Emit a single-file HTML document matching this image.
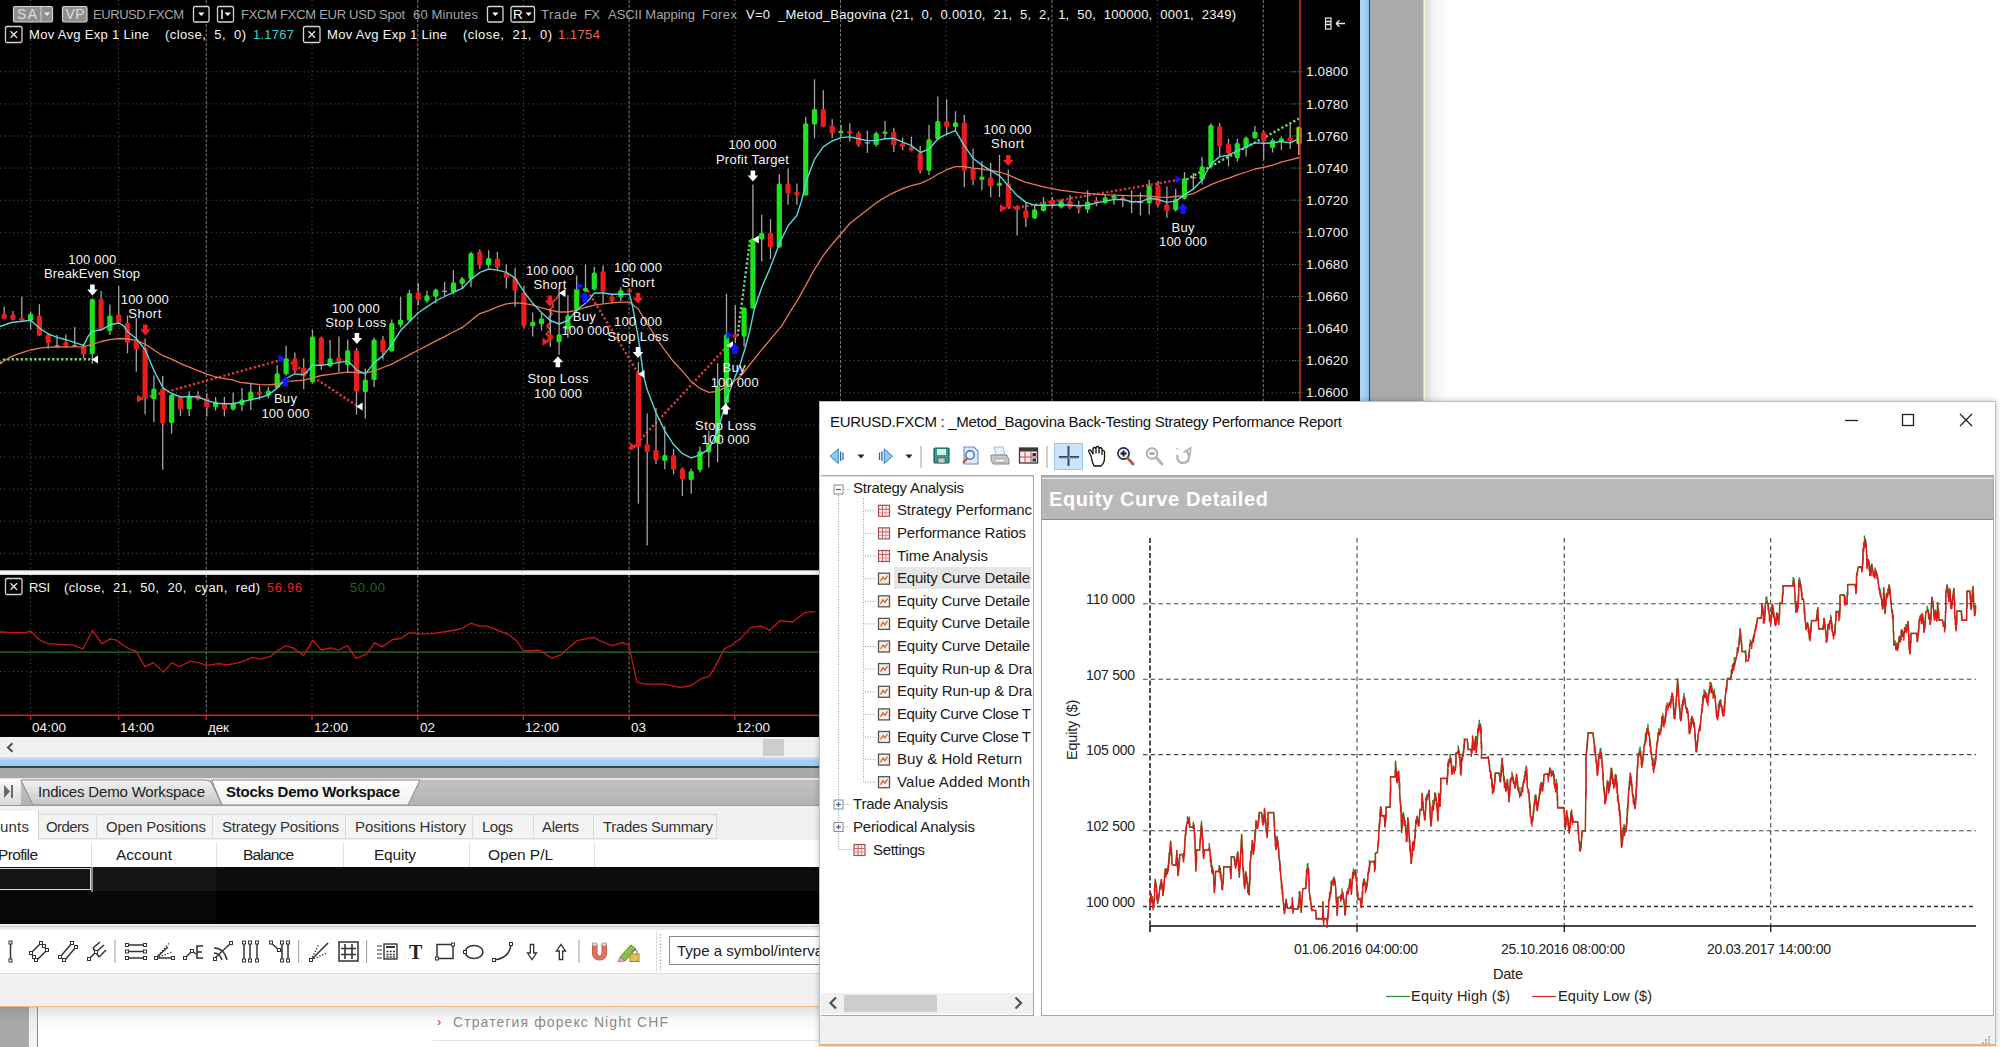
<!DOCTYPE html>
<html><head><meta charset="utf-8"><title>MultiCharts</title>
<style>
html,body{margin:0;padding:0;}
body{width:2000px;height:1047px;position:relative;overflow:hidden;background:#fff;font-family:"Liberation Sans",sans-serif;}
svg{position:absolute;left:0;top:0;overflow:visible;}
</style></head><body>
<div style="position:absolute;left:0px;top:0px;width:2000px;height:1047px;background:#ffffff;"></div>
<div style="position:absolute;left:1425px;top:0px;width:30px;height:401px;background:linear-gradient(90deg,#dcdcdc 0,#f2f2f2 8px,#ffffff 24px);"></div>
<div style="position:absolute;left:0px;top:1007px;width:820px;height:40px;background:#ffffff;"></div>
<div style="position:absolute;left:0px;top:1007px;width:28.5px;height:40px;background:#a9a9a9;"></div>
<div style="position:absolute;left:28.5px;top:1007px;width:8px;height:40px;background:#f3f3f3;"></div>
<div style="position:absolute;left:36.5px;top:1007px;width:1.2px;height:40px;background:#8c8c8c;"></div>
<div style="position:absolute;left:0px;top:1007px;width:820px;height:24px;background:linear-gradient(180deg,rgba(60,60,60,.16),rgba(120,120,120,.05) 50%,rgba(255,255,255,0));"></div>
<span style="position:absolute;left:437.0px;top:1012.5px;font-size:13px;line-height:17px;color:#d04020;white-space:pre;">›</span>
<span style="position:absolute;left:453.0px;top:1013.0px;font-size:14px;line-height:18px;color:#8a8a8a;white-space:pre;letter-spacing:1.095px;">Стратегия форекс Night CHF</span>
<div style="position:absolute;left:433px;top:1040px;width:390px;height:1px;background:#e4e4e4;"></div>
<div style="position:absolute;left:0px;top:0px;width:1360px;height:737px;background:#000000;"></div>
<svg width="1360" height="737" fill="none"><path d="M0 71.8 H1299" stroke="#606060" stroke-width="1" stroke-dasharray="1 3.4"/><path d="M1292 71.8 H1305" stroke="#8a8a8a" stroke-width="1" stroke-dasharray="1 2.2"/><path d="M0 103.9 H1299" stroke="#606060" stroke-width="1" stroke-dasharray="1 3.4"/><path d="M1292 103.9 H1305" stroke="#8a8a8a" stroke-width="1" stroke-dasharray="1 2.2"/><path d="M0 136.0 H1299" stroke="#606060" stroke-width="1" stroke-dasharray="1 3.4"/><path d="M1292 136.0 H1305" stroke="#8a8a8a" stroke-width="1" stroke-dasharray="1 2.2"/><path d="M0 168.1 H1299" stroke="#606060" stroke-width="1" stroke-dasharray="1 3.4"/><path d="M1292 168.1 H1305" stroke="#8a8a8a" stroke-width="1" stroke-dasharray="1 2.2"/><path d="M0 200.2 H1299" stroke="#606060" stroke-width="1" stroke-dasharray="1 3.4"/><path d="M1292 200.2 H1305" stroke="#8a8a8a" stroke-width="1" stroke-dasharray="1 2.2"/><path d="M0 232.3 H1299" stroke="#606060" stroke-width="1" stroke-dasharray="1 3.4"/><path d="M1292 232.3 H1305" stroke="#8a8a8a" stroke-width="1" stroke-dasharray="1 2.2"/><path d="M0 264.4 H1299" stroke="#606060" stroke-width="1" stroke-dasharray="1 3.4"/><path d="M1292 264.4 H1305" stroke="#8a8a8a" stroke-width="1" stroke-dasharray="1 2.2"/><path d="M0 296.5 H1299" stroke="#606060" stroke-width="1" stroke-dasharray="1 3.4"/><path d="M1292 296.5 H1305" stroke="#8a8a8a" stroke-width="1" stroke-dasharray="1 2.2"/><path d="M0 328.6 H1299" stroke="#606060" stroke-width="1" stroke-dasharray="1 3.4"/><path d="M1292 328.6 H1305" stroke="#8a8a8a" stroke-width="1" stroke-dasharray="1 2.2"/><path d="M0 360.7 H1299" stroke="#606060" stroke-width="1" stroke-dasharray="1 3.4"/><path d="M1292 360.7 H1305" stroke="#8a8a8a" stroke-width="1" stroke-dasharray="1 2.2"/><path d="M0 392.8 H1299" stroke="#606060" stroke-width="1" stroke-dasharray="1 3.4"/><path d="M1292 392.8 H1305" stroke="#8a8a8a" stroke-width="1" stroke-dasharray="1 2.2"/><path d="M0 424.9 H1299" stroke="#606060" stroke-width="1" stroke-dasharray="1 3.4"/><path d="M0 457.0 H1299" stroke="#606060" stroke-width="1" stroke-dasharray="1 3.4"/><path d="M0 489.1 H1299" stroke="#606060" stroke-width="1" stroke-dasharray="1 3.4"/><path d="M0 521.2 H1299" stroke="#606060" stroke-width="1" stroke-dasharray="1 3.4"/><path d="M0 553.3 H1299" stroke="#606060" stroke-width="1" stroke-dasharray="1 3.4"/><path d="M0 632.6 H1299" stroke="#606060" stroke-width="1" stroke-dasharray="1 3.4"/><path d="M0 671.7 H1299" stroke="#606060" stroke-width="1" stroke-dasharray="1 3.4"/><path d="M206.3 0 V570 M206.3 575 V715" stroke="#747474" stroke-width="1.1" stroke-dasharray="3 1.8"/><path d="M417.7 0 V570 M417.7 575 V715" stroke="#747474" stroke-width="1.1" stroke-dasharray="3 1.8"/><path d="M629.1 0 V570 M629.1 575 V715" stroke="#747474" stroke-width="1.1" stroke-dasharray="3 1.8"/><path d="M840.5 0 V570 M840.5 575 V715" stroke="#747474" stroke-width="1.1" stroke-dasharray="3 1.8"/><path d="M1051.9 0 V570 M1051.9 575 V715" stroke="#747474" stroke-width="1.1" stroke-dasharray="3 1.8"/><path d="M1263.3 0 V570 M1263.3 575 V715" stroke="#747474" stroke-width="1.1" stroke-dasharray="3 1.8"/><path d="M30.6 0 V570 M30.6 575 V715" stroke="#606060" stroke-width="1" stroke-dasharray="1 3.4"/><path d="M118.6 0 V570 M118.6 575 V715" stroke="#606060" stroke-width="1" stroke-dasharray="1 3.4"/><path d="M312.0 0 V570 M312.0 575 V715" stroke="#606060" stroke-width="1" stroke-dasharray="1 3.4"/><path d="M523.4 0 V570 M523.4 575 V715" stroke="#606060" stroke-width="1" stroke-dasharray="1 3.4"/><path d="M734.8 0 V570 M734.8 575 V715" stroke="#606060" stroke-width="1" stroke-dasharray="1 3.4"/><path d="M946.2 0 V570 M946.2 575 V715" stroke="#606060" stroke-width="1" stroke-dasharray="1 3.4"/><path d="M1157.6 0 V570 M1157.6 575 V715" stroke="#606060" stroke-width="1" stroke-dasharray="1 3.4"/><path d="M0.0 363.7 L4.6 359.2 L92.8 359.2" stroke="#78d878" stroke-width="2.4" stroke-dasharray="2.2 2.3"/><path d="M141.0 398.8 L281.0 360.0" stroke="#e23838" stroke-width="2.4" stroke-dasharray="2.2 2.3"/><path d="M287.0 360.0 L358.0 406.4" stroke="#e23838" stroke-width="2.4" stroke-dasharray="2.2 2.3"/><path d="M546.5 342 L550 338 L546.5 334 L550.5 330 L547 326 L551 322 L548 318 L552 314 L549.5 310 L553.5 306 L552 302 L556 299 L560 293" stroke="#e23838" stroke-width="1.8"/><path d="M587.7 290.7 L638.1 373.2" stroke="#e23838" stroke-width="2.4" stroke-dasharray="2.2 2.3"/><path d="M634.0 446.5 L728.3 345.0" stroke="#e23838" stroke-width="2.4" stroke-dasharray="2.2 2.3"/><path d="M737.5 336.0 L750.0 240.0" stroke="#78d878" stroke-width="2.4" stroke-dasharray="2.2 2.3"/><path d="M1004.0 208.0 L1019.0 207.3 L1178.0 180.0" stroke="#e23838" stroke-width="2.4" stroke-dasharray="2.2 2.3"/><path d="M1186.5 179.5 L1299.0 118.6" stroke="#78d878" stroke-width="2.4" stroke-dasharray="2.2 2.3"/><path d="M4.2 306.5 V319.1" stroke="#a4a4a4" stroke-width="1.3"/><rect x="1.6" y="313.8" width="5.2" height="5.3" rx="1.6" fill="#ea1c1c"/><path d="M13.0 311.0 V320.2" stroke="#a4a4a4" stroke-width="1.3"/><rect x="10.4" y="314.5" width="5.2" height="5.7" rx="1.6" fill="#ea1c1c"/><path d="M21.8 296.8 V321.3" stroke="#a4a4a4" stroke-width="1.3"/><rect x="19.2" y="317.9" width="5.2" height="2.7" rx="1.6" fill="#ea1c1c"/><path d="M30.6 311.5 V329.4" stroke="#a4a4a4" stroke-width="1.3"/><rect x="28.0" y="313.8" width="5.2" height="6.9" rx="1.6" fill="#1fe21f"/><path d="M39.4 304.2 V336.2" stroke="#a4a4a4" stroke-width="1.3"/><rect x="36.8" y="315.6" width="5.2" height="20.2" rx="1.6" fill="#ea1c1c"/><path d="M48.2 334.0 V348.8" stroke="#a4a4a4" stroke-width="1.3"/><rect x="45.6" y="334.4" width="5.2" height="8.7" rx="1.6" fill="#ea1c1c"/><path d="M57.0 335.1 V347.7" stroke="#a4a4a4" stroke-width="1.3"/><path d="M54.5 345.9 H59.5" stroke="#a4a4a4" stroke-width="1.3"/><path d="M65.9 334.4 V347.7" stroke="#a4a4a4" stroke-width="1.3"/><rect x="63.3" y="342.0" width="5.2" height="4.6" rx="1.6" fill="#ea1c1c"/><path d="M74.7 327.1 V346.6" stroke="#a4a4a4" stroke-width="1.3"/><path d="M72.2 345.9 H77.2" stroke="#a4a4a4" stroke-width="1.3"/><path d="M83.5 344.3 V358.0" stroke="#a4a4a4" stroke-width="1.3"/><rect x="80.9" y="345.4" width="5.2" height="9.2" rx="1.6" fill="#ea1c1c"/><path d="M92.3 298.4 V363.7" stroke="#a4a4a4" stroke-width="1.3"/><rect x="89.7" y="299.1" width="5.2" height="55.0" rx="1.6" fill="#1fe21f"/><path d="M101.1 290.9 V330.5" stroke="#a4a4a4" stroke-width="1.3"/><rect x="98.5" y="299.1" width="5.2" height="30.2" rx="1.6" fill="#ea1c1c"/><path d="M109.9 304.6 V335.1" stroke="#a4a4a4" stroke-width="1.3"/><rect x="107.3" y="315.6" width="5.2" height="15.6" rx="1.6" fill="#1fe21f"/><path d="M118.7 285.8 V323.6" stroke="#a4a4a4" stroke-width="1.3"/><rect x="116.1" y="314.5" width="5.2" height="8.0" rx="1.6" fill="#ea1c1c"/><path d="M127.5 315.6 V353.4" stroke="#a4a4a4" stroke-width="1.3"/><rect x="124.9" y="322.5" width="5.2" height="20.6" rx="1.6" fill="#ea1c1c"/><path d="M136.3 317.9 V371.8" stroke="#a4a4a4" stroke-width="1.3"/><rect x="133.7" y="340.8" width="5.2" height="8.7" rx="1.6" fill="#ea1c1c"/><path d="M145.1 338.5 V414.2" stroke="#a4a4a4" stroke-width="1.3"/><rect x="142.5" y="347.7" width="5.2" height="50.4" rx="1.6" fill="#ea1c1c"/><path d="M153.9 375.2 V422.2" stroke="#a4a4a4" stroke-width="1.3"/><rect x="151.3" y="388.5" width="5.2" height="10.8" rx="1.6" fill="#1fe21f"/><path d="M162.7 375.7 V469.8" stroke="#a4a4a4" stroke-width="1.3"/><rect x="160.1" y="388.5" width="5.2" height="34.8" rx="1.6" fill="#ea1c1c"/><path d="M171.6 394.0 V433.6" stroke="#a4a4a4" stroke-width="1.3"/><rect x="169.0" y="394.7" width="5.2" height="28.2" rx="1.6" fill="#1fe21f"/><path d="M180.4 395.8 V416.0" stroke="#a4a4a4" stroke-width="1.3"/><rect x="177.8" y="397.0" width="5.2" height="12.6" rx="1.6" fill="#ea1c1c"/><path d="M189.2 391.2 V416.0" stroke="#a4a4a4" stroke-width="1.3"/><rect x="186.6" y="395.4" width="5.2" height="14.2" rx="1.6" fill="#1fe21f"/><path d="M198.0 391.2 V400.4" stroke="#a4a4a4" stroke-width="1.3"/><rect x="195.4" y="394.7" width="5.2" height="4.6" rx="1.6" fill="#ea1c1c"/><path d="M206.8 393.5 V416.4" stroke="#a4a4a4" stroke-width="1.3"/><rect x="204.2" y="398.1" width="5.2" height="9.2" rx="1.6" fill="#ea1c1c"/><path d="M215.6 397.0 V410.7" stroke="#a4a4a4" stroke-width="1.3"/><rect x="213.0" y="401.5" width="5.2" height="5.7" rx="1.6" fill="#1fe21f"/><path d="M224.4 397.0 V416.4" stroke="#a4a4a4" stroke-width="1.3"/><rect x="221.8" y="403.8" width="5.2" height="5.7" rx="1.6" fill="#ea1c1c"/><path d="M233.2 392.4 V410.7" stroke="#a4a4a4" stroke-width="1.3"/><rect x="230.6" y="402.7" width="5.2" height="6.9" rx="1.6" fill="#1fe21f"/><path d="M242.0 388.1 V411.0" stroke="#a4a4a4" stroke-width="1.3"/><rect x="239.4" y="399.6" width="5.2" height="5.7" rx="1.6" fill="#1fe21f"/><path d="M250.8 383.5 V409.9" stroke="#a4a4a4" stroke-width="1.3"/><rect x="248.2" y="391.5" width="5.2" height="9.2" rx="1.6" fill="#1fe21f"/><path d="M259.6 385.8 V399.6" stroke="#a4a4a4" stroke-width="1.3"/><rect x="257.0" y="391.5" width="5.2" height="3.4" rx="1.6" fill="#ea1c1c"/><path d="M268.4 387.0 V398.4" stroke="#a4a4a4" stroke-width="1.3"/><rect x="265.8" y="390.4" width="5.2" height="5.0" rx="1.6" fill="#1fe21f"/><path d="M277.2 365.2 V388.1" stroke="#a4a4a4" stroke-width="1.3"/><rect x="274.6" y="373.2" width="5.2" height="14.9" rx="1.6" fill="#1fe21f"/><path d="M286.1 345.7 V375.5" stroke="#a4a4a4" stroke-width="1.3"/><rect x="283.5" y="358.3" width="5.2" height="16.0" rx="1.6" fill="#1fe21f"/><path d="M294.9 352.6 V373.2" stroke="#a4a4a4" stroke-width="1.3"/><rect x="292.3" y="358.3" width="5.2" height="12.6" rx="1.6" fill="#ea1c1c"/><path d="M303.7 358.3 V389.3" stroke="#a4a4a4" stroke-width="1.3"/><rect x="301.1" y="367.5" width="5.2" height="9.2" rx="1.6" fill="#ea1c1c"/><path d="M312.5 329.7 V383.5" stroke="#a4a4a4" stroke-width="1.3"/><rect x="309.9" y="336.6" width="5.2" height="45.8" rx="1.6" fill="#1fe21f"/><path d="M321.3 336.6 V369.8" stroke="#a4a4a4" stroke-width="1.3"/><rect x="318.7" y="337.2" width="5.2" height="28.0" rx="1.6" fill="#ea1c1c"/><path d="M330.1 340.0 V367.5" stroke="#a4a4a4" stroke-width="1.3"/><rect x="327.5" y="358.3" width="5.2" height="8.0" rx="1.6" fill="#1fe21f"/><path d="M338.9 336.6 V372.1" stroke="#a4a4a4" stroke-width="1.3"/><rect x="336.3" y="357.2" width="5.2" height="5.7" rx="1.6" fill="#ea1c1c"/><path d="M347.7 339.5 V372.1" stroke="#a4a4a4" stroke-width="1.3"/><rect x="345.1" y="350.3" width="5.2" height="14.9" rx="1.6" fill="#1fe21f"/><path d="M356.5 348.0 V414.5" stroke="#a4a4a4" stroke-width="1.3"/><rect x="353.9" y="350.3" width="5.2" height="41.2" rx="1.6" fill="#ea1c1c"/><path d="M365.3 368.6 V418.4" stroke="#a4a4a4" stroke-width="1.3"/><rect x="362.7" y="379.4" width="5.2" height="12.8" rx="1.6" fill="#1fe21f"/><path d="M374.1 337.7 V387.0" stroke="#a4a4a4" stroke-width="1.3"/><rect x="371.5" y="339.5" width="5.2" height="40.6" rx="1.6" fill="#1fe21f"/><path d="M382.9 335.9 V359.5" stroke="#a4a4a4" stroke-width="1.3"/><rect x="380.3" y="339.5" width="5.2" height="13.1" rx="1.6" fill="#ea1c1c"/><path d="M391.8 319.4 V351.4" stroke="#a4a4a4" stroke-width="1.3"/><rect x="389.2" y="322.8" width="5.2" height="28.6" rx="1.6" fill="#1fe21f"/><path d="M400.6 296.9 V327.4" stroke="#a4a4a4" stroke-width="1.3"/><rect x="398.0" y="319.4" width="5.2" height="5.7" rx="1.6" fill="#1fe21f"/><path d="M409.4 290.0 V321.7" stroke="#a4a4a4" stroke-width="1.3"/><rect x="406.8" y="293.0" width="5.2" height="27.5" rx="1.6" fill="#1fe21f"/><path d="M418.2 282.7 V305.6" stroke="#a4a4a4" stroke-width="1.3"/><rect x="415.6" y="292.3" width="5.2" height="7.6" rx="1.6" fill="#ea1c1c"/><path d="M427.0 290.7 V302.9" stroke="#a4a4a4" stroke-width="1.3"/><rect x="424.4" y="295.3" width="5.2" height="5.7" rx="1.6" fill="#1fe21f"/><path d="M435.8 288.4 V303.3" stroke="#a4a4a4" stroke-width="1.3"/><rect x="433.2" y="289.6" width="5.2" height="7.3" rx="1.6" fill="#1fe21f"/><path d="M444.6 281.6 V296.5" stroke="#a4a4a4" stroke-width="1.3"/><path d="M442.1 291.4 H447.1" stroke="#a4a4a4" stroke-width="1.3"/><path d="M453.4 270.1 V294.2" stroke="#a4a4a4" stroke-width="1.3"/><rect x="450.8" y="282.2" width="5.2" height="10.1" rx="1.6" fill="#1fe21f"/><path d="M462.2 277.0 V288.4" stroke="#a4a4a4" stroke-width="1.3"/><rect x="459.6" y="278.6" width="5.2" height="5.3" rx="1.6" fill="#1fe21f"/><path d="M471.0 251.8 V287.3" stroke="#a4a4a4" stroke-width="1.3"/><rect x="468.4" y="252.9" width="5.2" height="26.4" rx="1.6" fill="#1fe21f"/><path d="M479.8 249.5 V269.0" stroke="#a4a4a4" stroke-width="1.3"/><rect x="477.2" y="251.8" width="5.2" height="13.7" rx="1.6" fill="#ea1c1c"/><path d="M488.6 250.2 V267.8" stroke="#a4a4a4" stroke-width="1.3"/><rect x="486.0" y="258.0" width="5.2" height="7.6" rx="1.6" fill="#1fe21f"/><path d="M497.4 251.8 V270.1" stroke="#a4a4a4" stroke-width="1.3"/><rect x="494.8" y="258.6" width="5.2" height="9.2" rx="1.6" fill="#ea1c1c"/><path d="M506.3 264.4 V288.4" stroke="#a4a4a4" stroke-width="1.3"/><rect x="503.7" y="272.4" width="5.2" height="5.7" rx="1.6" fill="#ea1c1c"/><path d="M515.1 267.8 V306.8" stroke="#a4a4a4" stroke-width="1.3"/><rect x="512.5" y="277.7" width="5.2" height="13.1" rx="1.6" fill="#ea1c1c"/><path d="M523.9 286.1 V328.5" stroke="#a4a4a4" stroke-width="1.3"/><rect x="521.3" y="292.3" width="5.2" height="33.9" rx="1.6" fill="#ea1c1c"/><path d="M532.7 312.5 V336.6" stroke="#a4a4a4" stroke-width="1.3"/><rect x="530.1" y="321.7" width="5.2" height="4.6" rx="1.6" fill="#1fe21f"/><path d="M541.5 312.5 V330.8" stroke="#a4a4a4" stroke-width="1.3"/><rect x="538.9" y="318.2" width="5.2" height="6.2" rx="1.6" fill="#1fe21f"/><path d="M550.3 309.1 V346.9" stroke="#a4a4a4" stroke-width="1.3"/><rect x="547.7" y="334.3" width="5.2" height="5.7" rx="1.6" fill="#ea1c1c"/><path d="M559.1 288.4 V354.9" stroke="#a4a4a4" stroke-width="1.3"/><rect x="556.5" y="334.3" width="5.2" height="8.0" rx="1.6" fill="#1fe21f"/><path d="M567.9 295.3 V337.7" stroke="#a4a4a4" stroke-width="1.3"/><rect x="565.3" y="315.2" width="5.2" height="14.4" rx="1.6" fill="#1fe21f"/><path d="M576.7 275.4 V312.5" stroke="#a4a4a4" stroke-width="1.3"/><rect x="574.1" y="289.1" width="5.2" height="21.1" rx="1.6" fill="#1fe21f"/><path d="M585.5 264.4 V291.9" stroke="#a4a4a4" stroke-width="1.3"/><rect x="582.9" y="287.7" width="5.2" height="3.7" rx="1.6" fill="#1fe21f"/><path d="M594.3 266.7 V290.7" stroke="#a4a4a4" stroke-width="1.3"/><rect x="591.7" y="272.4" width="5.2" height="17.2" rx="1.6" fill="#1fe21f"/><path d="M603.1 265.5 V303.3" stroke="#a4a4a4" stroke-width="1.3"/><rect x="600.5" y="271.2" width="5.2" height="20.6" rx="1.6" fill="#ea1c1c"/><path d="M612.0 294.2 V303.3" stroke="#a4a4a4" stroke-width="1.3"/><rect x="609.4" y="296.0" width="5.2" height="5.0" rx="1.6" fill="#ea1c1c"/><path d="M620.8 287.3 V301.0" stroke="#a4a4a4" stroke-width="1.3"/><rect x="618.2" y="290.0" width="5.2" height="7.6" rx="1.6" fill="#1fe21f"/><path d="M629.6 288.4 V293.0" stroke="#a4a4a4" stroke-width="1.3"/><rect x="627.0" y="289.6" width="5.2" height="2.7" rx="1.6" fill="#ea1c1c"/><path d="M638.4 362.1 V503.7" stroke="#a4a4a4" stroke-width="1.3"/><rect x="635.8" y="372.4" width="5.2" height="74.5" rx="1.6" fill="#ea1c1c"/><path d="M647.2 413.6 V545.4" stroke="#a4a4a4" stroke-width="1.3"/><rect x="644.6" y="444.1" width="5.2" height="7.8" rx="1.6" fill="#ea1c1c"/><path d="M656.0 407.9 V464.1" stroke="#a4a4a4" stroke-width="1.3"/><rect x="653.4" y="449.6" width="5.2" height="11.0" rx="1.6" fill="#ea1c1c"/><path d="M664.8 426.2 V469.3" stroke="#a4a4a4" stroke-width="1.3"/><rect x="662.2" y="454.9" width="5.2" height="6.2" rx="1.6" fill="#1fe21f"/><path d="M673.6 448.7 V474.4" stroke="#a4a4a4" stroke-width="1.3"/><rect x="671.0" y="454.9" width="5.2" height="14.9" rx="1.6" fill="#ea1c1c"/><path d="M682.4 467.5 V496.1" stroke="#a4a4a4" stroke-width="1.3"/><rect x="679.8" y="468.6" width="5.2" height="10.8" rx="1.6" fill="#ea1c1c"/><path d="M691.2 468.6 V493.8" stroke="#a4a4a4" stroke-width="1.3"/><rect x="688.6" y="470.9" width="5.2" height="9.2" rx="1.6" fill="#1fe21f"/><path d="M700.0 446.4 V472.5" stroke="#a4a4a4" stroke-width="1.3"/><rect x="697.4" y="451.0" width="5.2" height="19.2" rx="1.6" fill="#1fe21f"/><path d="M708.8 430.8 V467.5" stroke="#a4a4a4" stroke-width="1.3"/><rect x="706.2" y="443.4" width="5.2" height="9.2" rx="1.6" fill="#1fe21f"/><path d="M717.6 363.2 V462.4" stroke="#a4a4a4" stroke-width="1.3"/><rect x="715.0" y="386.1" width="5.2" height="57.3" rx="1.6" fill="#1fe21f"/><path d="M726.5 293.7 V410.0" stroke="#a4a4a4" stroke-width="1.3"/><rect x="723.9" y="334.4" width="5.2" height="68.6" rx="1.6" fill="#1fe21f"/><path d="M735.3 305.0 V343.0" stroke="#a4a4a4" stroke-width="1.3"/><rect x="732.7" y="334.0" width="5.2" height="3.5" rx="1.6" fill="#ea1c1c"/><path d="M744.1 307.5 V346.5" stroke="#a4a4a4" stroke-width="1.3"/><rect x="741.5" y="307.5" width="5.2" height="29.2" rx="1.6" fill="#1fe21f"/><path d="M752.9 184.6 V309.0" stroke="#a4a4a4" stroke-width="1.3"/><rect x="750.3" y="238.4" width="5.2" height="70.2" rx="1.6" fill="#1fe21f"/><path d="M761.7 214.8 V261.3" stroke="#a4a4a4" stroke-width="1.3"/><rect x="759.1" y="232.7" width="5.2" height="6.9" rx="1.6" fill="#1fe21f"/><path d="M770.5 218.9 V259.0" stroke="#a4a4a4" stroke-width="1.3"/><rect x="767.9" y="232.7" width="5.2" height="14.9" rx="1.6" fill="#ea1c1c"/><path d="M779.3 174.3 V247.6" stroke="#a4a4a4" stroke-width="1.3"/><rect x="776.7" y="183.4" width="5.2" height="64.2" rx="1.6" fill="#1fe21f"/><path d="M788.1 168.5 V204.7" stroke="#a4a4a4" stroke-width="1.3"/><rect x="785.5" y="183.4" width="5.2" height="10.3" rx="1.6" fill="#ea1c1c"/><path d="M796.9 183.4 V204.7" stroke="#a4a4a4" stroke-width="1.3"/><rect x="794.3" y="191.4" width="5.2" height="4.1" rx="1.6" fill="#ea1c1c"/><path d="M805.7 117.0 V195.6" stroke="#a4a4a4" stroke-width="1.3"/><rect x="803.1" y="123.2" width="5.2" height="72.4" rx="1.6" fill="#1fe21f"/><path d="M814.5 79.2 V138.3" stroke="#a4a4a4" stroke-width="1.3"/><rect x="811.9" y="109.0" width="5.2" height="15.6" rx="1.6" fill="#1fe21f"/><path d="M823.3 90.2 V127.3" stroke="#a4a4a4" stroke-width="1.3"/><rect x="820.7" y="109.0" width="5.2" height="17.9" rx="1.6" fill="#ea1c1c"/><path d="M832.2 119.3 V138.3" stroke="#a4a4a4" stroke-width="1.3"/><rect x="829.6" y="125.5" width="5.2" height="8.2" rx="1.6" fill="#ea1c1c"/><path d="M841.0 125.0 V136.5" stroke="#a4a4a4" stroke-width="1.3"/><rect x="838.4" y="130.7" width="5.2" height="2.5" rx="1.6" fill="#1fe21f"/><path d="M849.8 123.2 V141.5" stroke="#a4a4a4" stroke-width="1.3"/><rect x="847.2" y="130.7" width="5.2" height="3.4" rx="1.6" fill="#ea1c1c"/><path d="M858.6 131.4 V146.8" stroke="#a4a4a4" stroke-width="1.3"/><rect x="856.0" y="133.0" width="5.2" height="12.1" rx="1.6" fill="#ea1c1c"/><path d="M867.4 130.7 V153.0" stroke="#a4a4a4" stroke-width="1.3"/><path d="M864.9 142.9 H869.9" stroke="#a4a4a4" stroke-width="1.3"/><path d="M876.2 131.4 V146.8" stroke="#a4a4a4" stroke-width="1.3"/><rect x="873.6" y="133.0" width="5.2" height="12.1" rx="1.6" fill="#1fe21f"/><path d="M885.0 120.9 V138.7" stroke="#a4a4a4" stroke-width="1.3"/><rect x="882.4" y="131.4" width="5.2" height="2.7" rx="1.6" fill="#1fe21f"/><path d="M893.8 127.7 V152.0" stroke="#a4a4a4" stroke-width="1.3"/><rect x="891.2" y="131.9" width="5.2" height="13.7" rx="1.6" fill="#ea1c1c"/><path d="M902.6 137.6 V150.2" stroke="#a4a4a4" stroke-width="1.3"/><rect x="900.0" y="142.9" width="5.2" height="3.9" rx="1.6" fill="#ea1c1c"/><path d="M911.4 136.9 V151.3" stroke="#a4a4a4" stroke-width="1.3"/><rect x="908.8" y="146.8" width="5.2" height="3.9" rx="1.6" fill="#ea1c1c"/><path d="M920.2 146.1 V173.6" stroke="#a4a4a4" stroke-width="1.3"/><rect x="917.6" y="153.0" width="5.2" height="17.9" rx="1.6" fill="#ea1c1c"/><path d="M929.0 125.0 V174.9" stroke="#a4a4a4" stroke-width="1.3"/><rect x="926.4" y="139.2" width="5.2" height="31.6" rx="1.6" fill="#1fe21f"/><path d="M937.8 96.4 V139.9" stroke="#a4a4a4" stroke-width="1.3"/><rect x="935.2" y="120.9" width="5.2" height="18.3" rx="1.6" fill="#1fe21f"/><path d="M946.7 99.3 V135.3" stroke="#a4a4a4" stroke-width="1.3"/><rect x="944.1" y="120.9" width="5.2" height="6.0" rx="1.6" fill="#ea1c1c"/><path d="M955.5 111.2 V131.9" stroke="#a4a4a4" stroke-width="1.3"/><rect x="952.9" y="122.2" width="5.2" height="5.0" rx="1.6" fill="#1fe21f"/><path d="M964.3 114.7 V186.9" stroke="#a4a4a4" stroke-width="1.3"/><rect x="961.7" y="122.2" width="5.2" height="48.6" rx="1.6" fill="#ea1c1c"/><path d="M973.1 148.4 V185.0" stroke="#a4a4a4" stroke-width="1.3"/><rect x="970.5" y="168.1" width="5.2" height="11.9" rx="1.6" fill="#ea1c1c"/><path d="M981.9 161.2 V190.3" stroke="#a4a4a4" stroke-width="1.3"/><rect x="979.3" y="176.6" width="5.2" height="3.4" rx="1.6" fill="#1fe21f"/><path d="M990.7 162.8 V197.2" stroke="#a4a4a4" stroke-width="1.3"/><rect x="988.1" y="177.2" width="5.2" height="9.2" rx="1.6" fill="#ea1c1c"/><path d="M999.5 154.8 V197.2" stroke="#a4a4a4" stroke-width="1.3"/><rect x="996.9" y="182.7" width="5.2" height="3.0" rx="1.6" fill="#1fe21f"/><path d="M1008.3 169.7 V208.6" stroke="#a4a4a4" stroke-width="1.3"/><rect x="1005.7" y="183.4" width="5.2" height="24.1" rx="1.6" fill="#ea1c1c"/><path d="M1017.1 205.2 V235.4" stroke="#a4a4a4" stroke-width="1.3"/><rect x="1014.5" y="205.7" width="5.2" height="4.6" rx="1.6" fill="#ea1c1c"/><path d="M1025.9 202.9 V227.0" stroke="#a4a4a4" stroke-width="1.3"/><rect x="1023.3" y="210.2" width="5.2" height="8.2" rx="1.6" fill="#ea1c1c"/><path d="M1034.7 204.7 V218.9" stroke="#a4a4a4" stroke-width="1.3"/><rect x="1032.1" y="209.3" width="5.2" height="9.2" rx="1.6" fill="#1fe21f"/><path d="M1043.5 197.2 V211.6" stroke="#a4a4a4" stroke-width="1.3"/><rect x="1040.9" y="204.1" width="5.2" height="6.9" rx="1.6" fill="#1fe21f"/><path d="M1052.4 197.2 V207.5" stroke="#a4a4a4" stroke-width="1.3"/><rect x="1049.8" y="199.5" width="5.2" height="5.7" rx="1.6" fill="#ea1c1c"/><path d="M1061.2 199.5 V208.6" stroke="#a4a4a4" stroke-width="1.3"/><rect x="1058.6" y="201.1" width="5.2" height="6.4" rx="1.6" fill="#1fe21f"/><path d="M1070.0 194.9 V209.3" stroke="#a4a4a4" stroke-width="1.3"/><rect x="1067.4" y="200.6" width="5.2" height="7.3" rx="1.6" fill="#ea1c1c"/><path d="M1078.8 201.1 V213.2" stroke="#a4a4a4" stroke-width="1.3"/><rect x="1076.2" y="205.7" width="5.2" height="3.0" rx="1.6" fill="#ea1c1c"/><path d="M1087.6 190.3 V213.2" stroke="#a4a4a4" stroke-width="1.3"/><rect x="1085.0" y="201.8" width="5.2" height="8.0" rx="1.6" fill="#1fe21f"/><path d="M1096.4 197.2 V206.3" stroke="#a4a4a4" stroke-width="1.3"/><rect x="1093.8" y="200.2" width="5.2" height="3.2" rx="1.6" fill="#ea1c1c"/><path d="M1105.2 193.7 V204.1" stroke="#a4a4a4" stroke-width="1.3"/><rect x="1102.6" y="197.2" width="5.2" height="5.7" rx="1.6" fill="#1fe21f"/><path d="M1114.0 193.7 V204.7" stroke="#a4a4a4" stroke-width="1.3"/><rect x="1111.4" y="195.6" width="5.2" height="3.2" rx="1.6" fill="#1fe21f"/><path d="M1122.8 195.6 V207.0" stroke="#a4a4a4" stroke-width="1.3"/><rect x="1120.2" y="197.2" width="5.2" height="3.4" rx="1.6" fill="#ea1c1c"/><path d="M1131.6 190.3 V213.2" stroke="#a4a4a4" stroke-width="1.3"/><path d="M1129.1 201.8 H1134.1" stroke="#a4a4a4" stroke-width="1.3"/><path d="M1140.4 192.6 V215.5" stroke="#a4a4a4" stroke-width="1.3"/><path d="M1137.9 202.4 H1142.9" stroke="#a4a4a4" stroke-width="1.3"/><path d="M1149.2 180.0 V214.4" stroke="#a4a4a4" stroke-width="1.3"/><rect x="1146.6" y="185.7" width="5.2" height="17.6" rx="1.6" fill="#1fe21f"/><path d="M1158.0 181.1 V207.0" stroke="#a4a4a4" stroke-width="1.3"/><rect x="1155.4" y="185.0" width="5.2" height="20.2" rx="1.6" fill="#ea1c1c"/><path d="M1166.9 186.4 V217.8" stroke="#a4a4a4" stroke-width="1.3"/><rect x="1164.3" y="204.1" width="5.2" height="6.9" rx="1.6" fill="#ea1c1c"/><path d="M1175.7 188.7 V211.6" stroke="#a4a4a4" stroke-width="1.3"/><rect x="1173.1" y="198.8" width="5.2" height="11.5" rx="1.6" fill="#1fe21f"/><path d="M1184.5 172.0 V199.5" stroke="#a4a4a4" stroke-width="1.3"/><rect x="1181.9" y="178.2" width="5.2" height="20.6" rx="1.6" fill="#1fe21f"/><path d="M1193.3 173.1 V189.2" stroke="#a4a4a4" stroke-width="1.3"/><path d="M1190.8 177.7 H1195.8" stroke="#a4a4a4" stroke-width="1.3"/><path d="M1202.1 157.1 V184.6" stroke="#a4a4a4" stroke-width="1.3"/><rect x="1199.5" y="166.2" width="5.2" height="13.7" rx="1.6" fill="#1fe21f"/><path d="M1210.9 123.2 V168.5" stroke="#a4a4a4" stroke-width="1.3"/><rect x="1208.3" y="125.0" width="5.2" height="41.2" rx="1.6" fill="#1fe21f"/><path d="M1219.7 123.2 V155.9" stroke="#a4a4a4" stroke-width="1.3"/><rect x="1217.1" y="126.1" width="5.2" height="20.6" rx="1.6" fill="#ea1c1c"/><path d="M1228.5 138.7 V166.2" stroke="#a4a4a4" stroke-width="1.3"/><rect x="1225.9" y="143.8" width="5.2" height="9.9" rx="1.6" fill="#ea1c1c"/><path d="M1237.3 138.7 V161.7" stroke="#a4a4a4" stroke-width="1.3"/><rect x="1234.7" y="142.9" width="5.2" height="15.4" rx="1.6" fill="#1fe21f"/><path d="M1246.1 136.5 V156.6" stroke="#a4a4a4" stroke-width="1.3"/><rect x="1243.5" y="137.6" width="5.2" height="10.3" rx="1.6" fill="#1fe21f"/><path d="M1254.9 126.1 V138.7" stroke="#a4a4a4" stroke-width="1.3"/><rect x="1252.3" y="131.4" width="5.2" height="6.9" rx="1.6" fill="#1fe21f"/><path d="M1263.7 130.7 V159.4" stroke="#a4a4a4" stroke-width="1.3"/><rect x="1261.1" y="131.9" width="5.2" height="9.6" rx="1.6" fill="#ea1c1c"/><path d="M1272.6 138.3 V152.5" stroke="#a4a4a4" stroke-width="1.3"/><rect x="1270.0" y="139.9" width="5.2" height="8.0" rx="1.6" fill="#1fe21f"/><path d="M1281.4 136.5 V150.2" stroke="#a4a4a4" stroke-width="1.3"/><rect x="1278.8" y="138.3" width="5.2" height="3.9" rx="1.6" fill="#1fe21f"/><path d="M1290.2 123.8 V149.1" stroke="#a4a4a4" stroke-width="1.3"/><rect x="1287.6" y="137.6" width="5.2" height="3.9" rx="1.6" fill="#ea1c1c"/><path d="M1299.0 126.8 V154.8" stroke="#a4a4a4" stroke-width="1.3"/><rect x="1296.4" y="126.8" width="5.2" height="17.6" rx="1.6" fill="#9ad81c"/><path d="M1299 144.5 V155" stroke="#f09080" stroke-width="1.6"/><path d="M0.0 363.3 L6.9 359.2 L13.7 355.7 L22.9 352.3 L30.7 350.0 L39.6 348.2 L48.4 347.2 L57.3 347.0 L66.0 346.8 L74.9 346.8 L83.6 346.6 L92.3 344.3 L101.3 341.5 L110.0 339.7 L118.9 338.5 L127.6 339.0 L136.3 340.4 L145.3 344.3 L154.0 350.0 L162.9 355.7 L171.6 359.2 L180.6 363.7 L189.3 367.2 L198.0 370.6 L206.9 374.1 L215.6 377.0 L224.6 378.6 L233.3 380.2 L240.0 382.4 L250.8 383.5 L259.7 384.7 L268.4 384.9 L277.1 384.0 L286.1 381.7 L294.8 380.8 L303.7 380.1 L312.4 377.8 L321.3 375.5 L330.1 374.4 L339.0 373.2 L347.7 372.1 L356.4 372.5 L365.3 373.2 L374.1 370.9 L383.0 367.5 L391.7 364.1 L400.4 359.5 L409.3 354.9 L418.0 350.3 L427.0 345.7 L435.7 341.1 L444.6 336.6 L453.3 332.0 L462.3 327.4 L471.0 320.5 L479.9 313.6 L488.7 310.7 L497.4 306.8 L506.4 303.8 L515.1 302.9 L524.0 303.3 L532.7 305.2 L541.4 307.9 L550.3 310.2 L559.1 312.0 L568.0 312.0 L576.7 310.2 L585.4 307.5 L594.3 305.2 L603.1 303.8 L612.0 302.9 L620.7 302.2 L629.6 302.2 L638.3 309.1 L647.3 324.0 L656.0 337.7 L664.9 350.3 L673.6 361.8 L682.5 371.2 L691.2 381.6 L699.9 388.4 L708.8 392.3 L717.8 391.4 L729.0 385.4 L741.6 375.0 L758.7 353.3 L770.2 339.6 L781.7 325.8 L791.3 309.9 L796.8 301.4 L805.8 285.4 L814.5 269.4 L823.2 255.6 L832.1 244.2 L841.1 233.8 L849.8 223.5 L858.5 216.7 L867.4 209.8 L876.1 202.9 L885.1 197.2 L893.8 192.6 L902.7 188.7 L911.4 185.7 L920.4 183.4 L929.1 179.5 L938.0 174.3 L946.7 169.7 L955.4 166.7 L964.3 166.7 L973.0 168.1 L981.9 169.0 L990.6 170.4 L999.6 172.0 L1008.3 174.9 L1017.2 178.8 L1025.9 182.3 L1034.9 184.6 L1043.6 186.9 L1052.3 188.7 L1061.2 190.3 L1069.9 191.4 L1078.9 192.6 L1087.6 193.3 L1096.5 194.2 L1105.2 194.9 L1113.9 195.1 L1122.9 195.3 L1131.7 195.8 L1140.4 195.6 L1149.3 196.0 L1158.0 197.2 L1167.0 197.4 L1175.7 196.5 L1184.4 195.6 L1193.3 193.7 L1202.0 189.2 L1211.0 184.6 L1219.7 181.1 L1228.6 178.2 L1237.3 174.9 L1246.3 172.0 L1255.0 169.0 L1263.9 167.4 L1272.6 165.1 L1281.3 162.1 L1290.3 159.8 L1299.0 157.5" stroke="#e87858" stroke-width="1.3" stroke-linejoin="round"/><path d="M0.0 326.6 L11.5 322.5 L22.9 321.3 L30.7 320.2 L39.6 328.2 L48.4 334.0 L57.3 337.4 L66.0 339.7 L74.9 342.7 L83.6 345.4 L88.2 336.2 L92.3 331.2 L101.3 329.8 L110.0 324.8 L118.9 323.0 L123.7 325.9 L127.6 331.7 L136.3 338.5 L145.3 350.0 L154.0 370.6 L162.9 387.8 L171.6 393.5 L180.6 397.0 L189.3 396.5 L198.0 397.0 L206.9 400.4 L215.6 403.2 L224.6 403.8 L233.3 403.8 L240.0 402.3 L250.8 399.6 L259.7 397.7 L268.4 395.0 L277.1 388.1 L286.1 378.5 L294.8 373.9 L303.7 374.8 L308.7 369.8 L312.4 365.2 L321.3 365.2 L330.1 364.1 L339.0 362.4 L347.7 361.1 L352.3 365.2 L356.4 369.8 L365.3 373.9 L374.1 362.9 L383.0 355.6 L391.7 344.6 L400.4 330.8 L409.3 321.7 L418.0 313.0 L427.0 306.8 L435.7 301.0 L444.6 296.5 L453.3 292.3 L462.3 288.4 L471.0 279.3 L479.9 272.4 L488.7 269.0 L497.4 270.1 L506.4 272.4 L515.1 278.1 L524.0 291.9 L532.7 303.3 L541.4 312.5 L550.3 320.5 L559.1 324.0 L568.0 320.5 L576.7 310.2 L585.4 303.3 L590.0 298.7 L594.3 293.0 L603.1 293.0 L612.0 294.2 L620.7 294.2 L629.6 294.2 L632.4 305.6 L638.3 337.7 L643.5 375.8 L647.2 389.6 L655.9 412.5 L664.8 430.8 L673.6 444.6 L682.5 453.7 L691.2 457.9 L699.9 454.9 L708.8 449.2 L717.8 430.8 L726.7 399.0 L733.5 380.8 L739.3 367.0 L745.0 348.8 L749.6 331.6 L754.2 309.8 L761.6 287.7 L770.5 267.1 L779.2 244.2 L788.1 225.8 L796.8 215.5 L801.7 200.6 L805.8 182.3 L814.5 159.4 L823.2 146.8 L832.1 141.0 L841.1 137.6 L849.8 136.9 L858.5 138.7 L867.4 140.6 L876.1 140.6 L885.1 138.7 L893.8 138.3 L902.7 142.2 L911.4 145.6 L920.4 152.5 L929.1 149.1 L938.0 138.7 L946.7 134.2 L955.4 130.7 L964.3 145.6 L973.0 158.2 L981.9 165.1 L990.6 170.4 L999.6 175.9 L1008.3 185.7 L1017.2 195.6 L1025.9 202.4 L1034.9 205.2 L1043.6 205.2 L1052.3 205.2 L1061.2 204.7 L1069.9 205.2 L1078.9 205.7 L1087.6 205.2 L1096.5 202.9 L1105.2 201.1 L1113.9 199.5 L1122.9 199.5 L1131.7 201.8 L1140.4 201.8 L1149.3 198.3 L1158.0 199.5 L1167.0 202.4 L1175.7 201.1 L1184.4 194.9 L1193.3 189.2 L1202.0 180.0 L1211.0 164.0 L1219.7 156.6 L1228.6 155.2 L1237.3 150.7 L1246.3 146.8 L1255.0 142.9 L1263.9 143.3 L1272.6 142.9 L1281.3 141.5 L1290.3 142.9 L1299.0 138.7" stroke="#58d8d8" stroke-width="1.4" stroke-linejoin="round"/><path d="M91.5 359.6 l6.5 -4 v8 z" fill="#ffffff"/><path d="M90.1 284.5 h4.6 v5 h3 l-5.3 6 l-5.3 -6 h3 z" fill="#ffffff"/><path d="M143.0 324.5 h4.6 v5 h3 l-5.3 6 l-5.3 -6 h3 z" fill="#f02020"/><path d="M143.5 398.8 l-6.5 -4 v8 z" fill="#f02020"/><path d="M285.0 358.5 l-6.5 -4 v8 z" fill="#1414ff"/><path d="M285.4 376 l5.5 5.5 h-3 v5 h-5 v-5 h-3 z" fill="#1414ff"/><path d="M356.1 406.4 l6.5 -4 v8 z" fill="#ffffff"/><path d="M354.6 333.0 h4.6 v5 h3 l-5.3 6 l-5.3 -6 h3 z" fill="#ffffff"/><path d="M547.6 295.5 h4.6 v5 h3 l-5.3 6 l-5.3 -6 h3 z" fill="#f02020"/><path d="M549.0 341.8 l-6.5 -4 v8 z" fill="#f02020"/><path d="M559.0 293.0 l6.5 -4 v8 z" fill="#ffffff"/><path d="M555.6 367.3 h4.6 v-5 h3 l-5.3 -6 l-5.3 6 h3 z" fill="#ffffff"/><path d="M583.5 286.0 l-6.5 -4 v8 z" fill="#1414ff"/><path d="M584.5 292 l5.5 5.5 h-3 v5 h-5 v-5 h-3 z" fill="#1414ff"/><path d="M638.0 373.9 l6.5 -4 v8 z" fill="#ffffff"/><path d="M635.7 347.1 h4.6 v5 h3 l-5.3 6 l-5.3 -6 h3 z" fill="#ffffff"/><path d="M635.7 292.8 h4.6 v5 h3 l-5.3 6 l-5.3 -6 h3 z" fill="#f02020"/><path d="M636.5 446.7 l-6.5 -4 v8 z" fill="#f02020"/><path d="M726.5 345.3 l6.5 -4 v8 z" fill="#ffffff"/><path d="M723.3 414.5 h4.6 v-5 h3 l-5.3 -6 l-5.3 6 h3 z" fill="#ffffff"/><path d="M733.0 335.0 l-6.5 -4 v8 z" fill="#1414ff"/><path d="M734.7 343.5 l5.5 5.5 h-3 v5 h-5 v-5 h-3 z" fill="#1414ff"/><path d="M752.3 239.6 l6.5 -4 v8 z" fill="#ffffff"/><path d="M750.6 170.5 h4.6 v5 h3 l-5.3 6 l-5.3 -6 h3 z" fill="#ffffff"/><path d="M1006.0 155.0 h4.6 v5 h3 l-5.3 6 l-5.3 -6 h3 z" fill="#f02020"/><path d="M1006.5 208.2 l-6.5 -4 v8 z" fill="#f02020"/><path d="M1181.9 179.5 l-6.5 -4 v8 z" fill="#1414ff"/><path d="M1183 203.5 l5.5 5.5 h-3 v5 h-5 v-5 h-3 z" fill="#1414ff"/><rect x="0" y="570.3" width="1360" height="4.6" fill="#f2f2f2"/><path d="M0 652.2 H1299" stroke="#1f7a1f" stroke-width="1.3"/><path d="M0.0 631.8 L12.6 632.6 L25.2 632.6 L30.9 631.1 L38.8 639.5 L47.2 643.7 L60.9 644.4 L73.5 645.2 L82.9 649.0 L92.4 630.5 L101.8 643.7 L110.2 638.9 L116.5 640.2 L123.9 645.8 L130.2 649.4 L136.1 651.1 L144.9 666.8 L153.3 662.6 L163.4 672.1 L171.8 662.6 L179.5 666.8 L190.0 661.2 L198.4 662.6 L206.8 665.4 L218.4 663.7 L226.8 664.7 L235.2 663.7 L243.6 661.2 L252.0 657.4 L260.4 659.1 L270.9 656.3 L277.2 651.1 L285.6 645.8 L292.9 647.9 L303.4 655.3 L312.9 640.2 L321.3 650.0 L330.7 647.9 L338.1 650.0 L347.5 645.8 L355.9 658.4 L366.4 654.2 L374.8 642.7 L382.2 646.9 L392.7 639.5 L401.1 638.5 L409.5 632.6 L420.0 633.9 L431.5 633.6 L446.1 631.5 L460.6 629.0 L471.0 623.2 L479.3 626.1 L487.6 626.1 L497.9 630.3 L508.3 634.4 L516.6 640.7 L523.7 651.0 L539.4 650.2 L551.9 658.1 L560.2 655.2 L576.8 640.7 L593.4 637.3 L601.7 641.5 L612.0 645.6 L622.4 642.7 L628.6 644.8 L631.5 657.3 L636.9 682.2 L645.2 684.2 L663.9 684.2 L680.5 687.6 L690.9 685.5 L701.2 678.8 L709.5 675.9 L715.8 665.6 L724.1 649.0 L732.4 644.8 L740.7 638.6 L751.0 627.4 L761.4 626.1 L769.7 630.3 L780.1 620.7 L792.5 622.0 L805.0 612.4 L815.4 611.6" stroke="#c81818" stroke-width="1.3" stroke-linejoin="round"/><path d="M0 715.2 H1360" stroke="#d42020" stroke-width="1.5"/><path d="M206.3 715 V720" stroke="#d42020" stroke-width="1.4"/><path d="M417.7 715 V720" stroke="#d42020" stroke-width="1.4"/><path d="M629.1 715 V720" stroke="#d42020" stroke-width="1.4"/><path d="M840.5 715 V720" stroke="#d42020" stroke-width="1.4"/><path d="M1051.9 715 V720" stroke="#d42020" stroke-width="1.4"/><path d="M1263.3 715 V720" stroke="#d42020" stroke-width="1.4"/><path d="M30.6 715 V720" stroke="#d42020" stroke-width="1.4"/><path d="M118.6 715 V720" stroke="#d42020" stroke-width="1.4"/><path d="M312.0 715 V720" stroke="#d42020" stroke-width="1.4"/><path d="M523.4 715 V720" stroke="#d42020" stroke-width="1.4"/><path d="M734.8 715 V720" stroke="#d42020" stroke-width="1.4"/><path d="M946.2 715 V720" stroke="#d42020" stroke-width="1.4"/><path d="M1157.6 715 V720" stroke="#d42020" stroke-width="1.4"/><path d="M1300 0 V737" stroke="#c83028" stroke-width="1.5"/><rect x="13.5" y="6.5" width="39" height="15.5" rx="1.5" fill="#8e8e8e" stroke="#d4d4d4" stroke-width="1.2"/><path d="M41 7 V22" stroke="#d4d4d4" stroke-width="1"/><path d="M44 12.5 h6 l-3 3.5 z" fill="#f0f0f0"/><rect x="62.5" y="6.5" width="24.5" height="15.5" rx="1.5" fill="#8e8e8e" stroke="#d4d4d4" stroke-width="1.2"/><rect x="193.5" y="6.5" width="15.5" height="15.5" rx="1.5" fill="#000" stroke="#d4d4d4" stroke-width="1.3"/><path d="M198.1 12.5 h6.4 l-3.2 3.6 z" fill="#ffffff"/><rect x="217.5" y="6.5" width="16.0" height="15.5" rx="1.5" fill="#000" stroke="#d4d4d4" stroke-width="1.3"/><path d="M224.5 12.5 h6.4 l-3.2 3.6 z" fill="#ffffff"/><path d="M222.0 9.5 V19" stroke="#fff" stroke-width="1.5"/><rect x="487.5" y="6.5" width="15.5" height="15.5" rx="1.5" fill="#000" stroke="#d4d4d4" stroke-width="1.3"/><path d="M492.1 12.5 h6.4 l-3.2 3.6 z" fill="#ffffff"/><rect x="511.0" y="6.5" width="23.5" height="15.5" rx="1.5" fill="#000" stroke="#d4d4d4" stroke-width="1.3"/><path d="M525.5 12.5 h6.4 l-3.2 3.6 z" fill="#ffffff"/><rect x="5.5" y="26.5" width="16.5" height="16" rx="1.5" fill="#000" stroke="#d4d4d4" stroke-width="1.3"/><path d="M10.5 31.3 l6.5 6.5 m0 -6.5 l-6.5 6.5" stroke="#e8e8e8" stroke-width="1.3"/><rect x="303.5" y="26.5" width="16.5" height="16" rx="1.5" fill="#000" stroke="#d4d4d4" stroke-width="1.3"/><path d="M308.5 31.3 l6.5 6.5 m0 -6.5 l-6.5 6.5" stroke="#e8e8e8" stroke-width="1.3"/><rect x="5.5" y="578.5" width="16.5" height="16" rx="1.5" fill="#000" stroke="#d4d4d4" stroke-width="1.3"/><path d="M10.5 583.3 l6.5 6.5 m0 -6.5 l-6.5 6.5" stroke="#e8e8e8" stroke-width="1.3"/><rect x="1325.5" y="18" width="5.5" height="11" fill="none" stroke="#e8e8e8" stroke-width="1.2"/><path d="M1326 21.5 h5 M1326 24.5 h5 M1336 23.5 h9 M1336 23.5 l3.5 -3.2 M1336 23.5 l3.5 3.2" stroke="#e8e8e8" stroke-width="1.3"/></svg>
<span style="position:absolute;left:17.0px;top:5.3px;font-size:14px;line-height:18px;color:#dedede;white-space:pre;letter-spacing:1.325px;">SA</span>
<span style="position:absolute;left:65.5px;top:5.3px;font-size:14px;line-height:18px;color:#dedede;white-space:pre;letter-spacing:0.325px;">VP</span>
<span style="position:absolute;left:513.0px;top:6.1px;font-size:13.5px;line-height:17px;color:#ffffff;white-space:pre;">R</span>
<span style="position:absolute;left:93.0px;top:5.7px;font-size:13px;line-height:17px;color:#a6a6a6;white-space:pre;letter-spacing:-0.433px;">EURUSD.FXCM</span>
<span style="position:absolute;left:241.0px;top:5.7px;font-size:13px;line-height:17px;color:#a6a6a6;white-space:pre;letter-spacing:-0.273px;">FXCM FXCM EUR USD Spot</span>
<span style="position:absolute;left:413.0px;top:5.7px;font-size:13px;line-height:17px;color:#a6a6a6;white-space:pre;letter-spacing:0.157px;">60 Minutes</span>
<span style="position:absolute;left:541.0px;top:5.7px;font-size:13px;line-height:17px;color:#a6a6a6;white-space:pre;letter-spacing:0.631px;">Trade</span>
<span style="position:absolute;left:584.0px;top:5.7px;font-size:13px;line-height:17px;color:#a6a6a6;white-space:pre;letter-spacing:-0.611px;">FX</span>
<span style="position:absolute;left:608.0px;top:5.7px;font-size:13px;line-height:17px;color:#a6a6a6;white-space:pre;letter-spacing:-0.036px;">ASCII Mapping</span>
<span style="position:absolute;left:702.0px;top:5.7px;font-size:13px;line-height:17px;color:#a6a6a6;white-space:pre;letter-spacing:0.443px;">Forex</span>
<span style="position:absolute;left:746.0px;top:5.7px;font-size:13px;line-height:17px;color:#f4f4f4;white-space:pre;letter-spacing:0.254px;">V=0</span>
<span style="position:absolute;left:778.0px;top:5.7px;font-size:13px;line-height:17px;color:#f4f4f4;white-space:pre;letter-spacing:0.250px;">_Metod_Bagovina (21,  0,  0.0010,  21,  5,  2,  1,  50,  100000,  0001,  2349)</span>
<span style="position:absolute;left:29.0px;top:25.7px;font-size:13px;line-height:17px;color:#f4f4f4;white-space:pre;letter-spacing:0.314px;">Mov Avg Exp 1 Line</span>
<span style="position:absolute;left:165.0px;top:25.7px;font-size:13px;line-height:17px;color:#f4f4f4;white-space:pre;letter-spacing:0.419px;">(close,  5,  0)</span>
<span style="position:absolute;left:253.0px;top:25.7px;font-size:13px;line-height:17px;color:#38d0d0;white-space:pre;letter-spacing:0.248px;">1.1767</span>
<span style="position:absolute;left:327.0px;top:25.7px;font-size:13px;line-height:17px;color:#f4f4f4;white-space:pre;letter-spacing:0.314px;">Mov Avg Exp 1 Line</span>
<span style="position:absolute;left:463.0px;top:25.7px;font-size:13px;line-height:17px;color:#f4f4f4;white-space:pre;letter-spacing:0.442px;">(close,  21,  0)</span>
<span style="position:absolute;left:558.0px;top:25.7px;font-size:13px;line-height:17px;color:#e86848;white-space:pre;letter-spacing:0.448px;">1.1754</span>
<span style="position:absolute;left:29.0px;top:578.7px;font-size:13px;line-height:17px;color:#f4f4f4;white-space:pre;letter-spacing:-0.335px;">RSI</span>
<span style="position:absolute;left:64.0px;top:578.7px;font-size:13px;line-height:17px;color:#f4f4f4;white-space:pre;letter-spacing:0.388px;">(close,  21,  50,  20,  cyan,  red)</span>
<span style="position:absolute;left:267.0px;top:578.7px;font-size:13px;line-height:17px;color:#e02828;white-space:pre;letter-spacing:0.617px;">56.96</span>
<span style="position:absolute;left:350.0px;top:578.7px;font-size:13px;line-height:17px;color:#1a6a1a;white-space:pre;letter-spacing:0.617px;">50.00</span>
<span style="position:absolute;left:1306.0px;top:63.3px;font-size:13.5px;line-height:17px;color:#f0f0f0;white-space:pre;letter-spacing:0.142px;">1.0800</span>
<span style="position:absolute;left:1306.0px;top:95.5px;font-size:13.5px;line-height:17px;color:#f0f0f0;white-space:pre;letter-spacing:0.142px;">1.0780</span>
<span style="position:absolute;left:1306.0px;top:127.6px;font-size:13.5px;line-height:17px;color:#f0f0f0;white-space:pre;letter-spacing:0.142px;">1.0760</span>
<span style="position:absolute;left:1306.0px;top:159.7px;font-size:13.5px;line-height:17px;color:#f0f0f0;white-space:pre;letter-spacing:0.142px;">1.0740</span>
<span style="position:absolute;left:1306.0px;top:191.8px;font-size:13.5px;line-height:17px;color:#f0f0f0;white-space:pre;letter-spacing:0.142px;">1.0720</span>
<span style="position:absolute;left:1306.0px;top:223.9px;font-size:13.5px;line-height:17px;color:#f0f0f0;white-space:pre;letter-spacing:0.142px;">1.0700</span>
<span style="position:absolute;left:1306.0px;top:256.0px;font-size:13.5px;line-height:17px;color:#f0f0f0;white-space:pre;letter-spacing:0.142px;">1.0680</span>
<span style="position:absolute;left:1306.0px;top:288.1px;font-size:13.5px;line-height:17px;color:#f0f0f0;white-space:pre;letter-spacing:0.142px;">1.0660</span>
<span style="position:absolute;left:1306.0px;top:320.2px;font-size:13.5px;line-height:17px;color:#f0f0f0;white-space:pre;letter-spacing:0.142px;">1.0640</span>
<span style="position:absolute;left:1306.0px;top:352.3px;font-size:13.5px;line-height:17px;color:#f0f0f0;white-space:pre;letter-spacing:0.142px;">1.0620</span>
<span style="position:absolute;left:1306.0px;top:384.4px;font-size:13.5px;line-height:17px;color:#f0f0f0;white-space:pre;letter-spacing:0.142px;">1.0600</span>
<span style="position:absolute;left:32.0px;top:718.8px;font-size:13.5px;line-height:17px;color:#f0f0f0;white-space:pre;letter-spacing:0.055px;">04:00</span>
<span style="position:absolute;left:120.0px;top:718.8px;font-size:13.5px;line-height:17px;color:#f0f0f0;white-space:pre;letter-spacing:0.055px;">14:00</span>
<span style="position:absolute;left:208.0px;top:718.8px;font-size:13.5px;line-height:17px;color:#f0f0f0;white-space:pre;letter-spacing:-0.145px;">дек</span>
<span style="position:absolute;left:314.0px;top:718.8px;font-size:13.5px;line-height:17px;color:#f0f0f0;white-space:pre;letter-spacing:0.055px;">12:00</span>
<span style="position:absolute;left:420.0px;top:718.8px;font-size:13.5px;line-height:17px;color:#f0f0f0;white-space:pre;letter-spacing:-0.016px;">02</span>
<span style="position:absolute;left:525.0px;top:718.8px;font-size:13.5px;line-height:17px;color:#f0f0f0;white-space:pre;letter-spacing:0.055px;">12:00</span>
<span style="position:absolute;left:631.0px;top:718.8px;font-size:13.5px;line-height:17px;color:#f0f0f0;white-space:pre;letter-spacing:-0.016px;">03</span>
<span style="position:absolute;left:736.0px;top:718.8px;font-size:13.5px;line-height:17px;color:#f0f0f0;white-space:pre;letter-spacing:0.055px;">12:00</span>
<span style="position:absolute;left:68.3px;top:250.5px;font-size:13px;line-height:17px;color:#f4f4f4;white-space:pre;letter-spacing:0.168px;">100 000</span>
<span style="position:absolute;left:44.0px;top:264.7px;font-size:13px;line-height:17px;color:#f4f4f4;white-space:pre;letter-spacing:0.158px;">BreakEven Stop</span>
<span style="position:absolute;left:120.8px;top:290.5px;font-size:13px;line-height:17px;color:#f4f4f4;white-space:pre;letter-spacing:0.168px;">100 000</span>
<span style="position:absolute;left:128.3px;top:304.8px;font-size:13px;line-height:17px;color:#f4f4f4;white-space:pre;letter-spacing:0.482px;">Short</span>
<span style="position:absolute;left:273.9px;top:389.9px;font-size:13px;line-height:17px;color:#f4f4f4;white-space:pre;letter-spacing:0.300px;">Buy</span>
<span style="position:absolute;left:261.4px;top:404.8px;font-size:13px;line-height:17px;color:#f4f4f4;white-space:pre;letter-spacing:0.168px;">100 000</span>
<span style="position:absolute;left:331.7px;top:299.5px;font-size:13px;line-height:17px;color:#f4f4f4;white-space:pre;letter-spacing:0.168px;">100 000</span>
<span style="position:absolute;left:325.2px;top:313.5px;font-size:13px;line-height:17px;color:#f4f4f4;white-space:pre;letter-spacing:0.398px;">Stop Loss</span>
<span style="position:absolute;left:525.9px;top:261.5px;font-size:13px;line-height:17px;color:#f4f4f4;white-space:pre;letter-spacing:0.168px;">100 000</span>
<span style="position:absolute;left:533.4px;top:276.0px;font-size:13px;line-height:17px;color:#f4f4f4;white-space:pre;letter-spacing:0.482px;">Short</span>
<span style="position:absolute;left:527.5px;top:370.0px;font-size:13px;line-height:17px;color:#f4f4f4;white-space:pre;letter-spacing:0.398px;">Stop Loss</span>
<span style="position:absolute;left:534.0px;top:384.5px;font-size:13px;line-height:17px;color:#f4f4f4;white-space:pre;letter-spacing:0.168px;">100 000</span>
<span style="position:absolute;left:572.8px;top:307.5px;font-size:13px;line-height:17px;color:#f4f4f4;white-space:pre;letter-spacing:0.300px;">Buy</span>
<span style="position:absolute;left:561.4px;top:321.5px;font-size:13px;line-height:17px;color:#f4f4f4;white-space:pre;letter-spacing:0.168px;">100 000</span>
<span style="position:absolute;left:614.0px;top:259.3px;font-size:13px;line-height:17px;color:#f4f4f4;white-space:pre;letter-spacing:0.168px;">100 000</span>
<span style="position:absolute;left:621.5px;top:273.7px;font-size:13px;line-height:17px;color:#f4f4f4;white-space:pre;letter-spacing:0.482px;">Short</span>
<span style="position:absolute;left:614.0px;top:313.2px;font-size:13px;line-height:17px;color:#f4f4f4;white-space:pre;letter-spacing:0.168px;">100 000</span>
<span style="position:absolute;left:607.5px;top:327.5px;font-size:13px;line-height:17px;color:#f4f4f4;white-space:pre;letter-spacing:0.398px;">Stop Loss</span>
<span style="position:absolute;left:695.1px;top:416.5px;font-size:13px;line-height:17px;color:#f4f4f4;white-space:pre;letter-spacing:0.398px;">Stop Loss</span>
<span style="position:absolute;left:701.6px;top:431.0px;font-size:13px;line-height:17px;color:#f4f4f4;white-space:pre;letter-spacing:0.168px;">100 000</span>
<span style="position:absolute;left:722.5px;top:359.2px;font-size:13px;line-height:17px;color:#f4f4f4;white-space:pre;letter-spacing:0.300px;">Buy</span>
<span style="position:absolute;left:710.7px;top:373.5px;font-size:13px;line-height:17px;color:#f4f4f4;white-space:pre;letter-spacing:0.168px;">100 000</span>
<span style="position:absolute;left:728.4px;top:136.0px;font-size:13px;line-height:17px;color:#f4f4f4;white-space:pre;letter-spacing:0.168px;">100 000</span>
<span style="position:absolute;left:715.9px;top:150.5px;font-size:13px;line-height:17px;color:#f4f4f4;white-space:pre;letter-spacing:0.262px;">Profit Target</span>
<span style="position:absolute;left:983.6px;top:121.1px;font-size:13px;line-height:17px;color:#f4f4f4;white-space:pre;letter-spacing:0.168px;">100 000</span>
<span style="position:absolute;left:991.1px;top:135.3px;font-size:13px;line-height:17px;color:#f4f4f4;white-space:pre;letter-spacing:0.482px;">Short</span>
<span style="position:absolute;left:1171.5px;top:218.5px;font-size:13px;line-height:17px;color:#f4f4f4;white-space:pre;letter-spacing:0.300px;">Buy</span>
<span style="position:absolute;left:1159.0px;top:232.9px;font-size:13px;line-height:17px;color:#f4f4f4;white-space:pre;letter-spacing:0.168px;">100 000</span>
<div style="position:absolute;left:1360px;top:0px;width:9px;height:401px;background:linear-gradient(90deg,#b8d4ee,#9fd0f4 60%,#8cc4ee);"></div>
<div style="position:absolute;left:1369px;top:0px;width:1px;height:401px;background:#2a3a48;"></div>
<div style="position:absolute;left:1370px;top:0px;width:53.5px;height:401px;background:#aaaaaa;"></div>
<div style="position:absolute;left:1423px;top:0px;width:1.2px;height:401px;background:#f4c89a;"></div>
<div style="position:absolute;left:1424.2px;top:0px;width:1.3px;height:401px;background:#fff4e0;"></div>
<div style="position:absolute;left:0px;top:737px;width:820px;height:20px;background:#f0f0f0;"></div>
<div style="position:absolute;left:763px;top:739px;width:21px;height:17px;background:#cdcdcd;"></div>
<svg width="820" height="1047"><path d="M12.5 743.3 L8 747.5 L12.5 751.7" fill="none" stroke="#505050" stroke-width="2"/></svg>
<div style="position:absolute;left:0px;top:757px;width:820px;height:9px;background:linear-gradient(180deg,#cfe3f6,#a6cff2 40%,#9ccaf0);"></div>
<div style="position:absolute;left:0px;top:766px;width:820px;height:2px;background:#3a4650;"></div>
<div style="position:absolute;left:0px;top:768px;width:820px;height:10px;background:#a9a9a9;"></div>
<div style="position:absolute;left:0px;top:778px;width:820px;height:28px;background:linear-gradient(180deg,#c2c2c2 0,#b4b4b4 100%);"></div>
<div style="position:absolute;left:0px;top:778px;width:820px;height:1.5px;background:#e6e6e6;"></div>
<div style="position:absolute;left:0px;top:779px;width:21px;height:26px;background:linear-gradient(180deg,#fafafa,#d8d8d8);"></div>
<svg width="820" height="1047"><defs><linearGradient id="tg1" x1="0" y1="0" x2="0" y2="1"><stop offset="0" stop-color="#f4f4f4"/><stop offset="1" stop-color="#c4c4c4"/></linearGradient><linearGradient id="tg2" x1="0" y1="0" x2="0" y2="1"><stop offset="0" stop-color="#ffffff"/><stop offset="1" stop-color="#f0f0f0"/></linearGradient></defs><path d="M21 780 L206 780 Q210 780 212 784 L222 805 L33 805 Z" fill="url(#tg1)" stroke="#8c8c8c" stroke-width="1"/><path d="M214 786 L222 805 L408 805 L420 780 L212 780 Z" fill="url(#tg2)" stroke="#8c8c8c" stroke-width="1"/><path d="M4 785 L10 791.5 L4 798 Z" fill="#6a6a6a"/><rect x="11" y="785" width="2" height="13" fill="#6a6a6a"/></svg>
<span style="position:absolute;left:38.0px;top:782.0px;font-size:15px;line-height:19px;color:#222;white-space:pre;letter-spacing:-0.173px;">Indices Demo Workspace</span>
<span style="position:absolute;left:226.0px;top:782.0px;font-size:15px;line-height:19px;color:#111;white-space:pre;letter-spacing:-0.248px;font-weight:bold;">Stocks Demo Workspace</span>
<div style="position:absolute;left:0px;top:805px;width:820px;height:7px;background:#f2f2f2;"></div>
<div style="position:absolute;left:0px;top:805px;width:820px;height:1px;background:#9a9a9a;"></div>
<div style="position:absolute;left:0px;top:812px;width:820px;height:28px;background:#f0f0f0;"></div>
<div style="position:absolute;left:0px;top:811px;width:39px;height:30px;background:#ffffff;border-right:1px solid #d0d0d0;box-sizing:border-box;"></div>
<span style="position:absolute;left:0.0px;top:816.5px;font-size:15px;line-height:19px;color:#333;white-space:pre;letter-spacing:0.216px;">unts</span>
<div style="position:absolute;left:39px;top:814px;width:58px;height:25px;background:#f3f3f3;border:1px solid #dadada;border-left:none;box-sizing:border-box;"></div>
<span style="position:absolute;left:46.0px;top:816.5px;font-size:15px;line-height:19px;color:#333;white-space:pre;letter-spacing:-0.568px;">Orders</span>
<div style="position:absolute;left:97px;top:814px;width:116px;height:25px;background:#f3f3f3;border:1px solid #dadada;border-left:none;box-sizing:border-box;"></div>
<span style="position:absolute;left:106.0px;top:816.5px;font-size:15px;line-height:19px;color:#333;white-space:pre;letter-spacing:-0.133px;">Open Positions</span>
<div style="position:absolute;left:213px;top:814px;width:133px;height:25px;background:#f3f3f3;border:1px solid #dadada;border-left:none;box-sizing:border-box;"></div>
<span style="position:absolute;left:222.0px;top:816.5px;font-size:15px;line-height:19px;color:#333;white-space:pre;letter-spacing:-0.229px;">Strategy Positions</span>
<div style="position:absolute;left:346px;top:814px;width:127px;height:25px;background:#f3f3f3;border:1px solid #dadada;border-left:none;box-sizing:border-box;"></div>
<span style="position:absolute;left:355.0px;top:816.5px;font-size:15px;line-height:19px;color:#333;white-space:pre;letter-spacing:-0.044px;">Positions History</span>
<div style="position:absolute;left:473px;top:814px;width:61px;height:25px;background:#f3f3f3;border:1px solid #dadada;border-left:none;box-sizing:border-box;"></div>
<span style="position:absolute;left:482.0px;top:816.5px;font-size:15px;line-height:19px;color:#333;white-space:pre;letter-spacing:-0.509px;">Logs</span>
<div style="position:absolute;left:534px;top:814px;width:60px;height:25px;background:#f3f3f3;border:1px solid #dadada;border-left:none;box-sizing:border-box;"></div>
<span style="position:absolute;left:542.0px;top:816.5px;font-size:15px;line-height:19px;color:#333;white-space:pre;letter-spacing:-0.268px;">Alerts</span>
<div style="position:absolute;left:594px;top:814px;width:123px;height:25px;background:#f3f3f3;border:1px solid #dadada;border-left:none;box-sizing:border-box;"></div>
<span style="position:absolute;left:603.0px;top:816.5px;font-size:15px;line-height:19px;color:#333;white-space:pre;letter-spacing:-0.344px;">Trades Summary</span>
<div style="position:absolute;left:0px;top:840px;width:820px;height:27px;background:#ffffff;"></div>
<div style="position:absolute;left:91px;top:842px;width:1px;height:25px;background:#e2e2e2;"></div>
<div style="position:absolute;left:216px;top:842px;width:1px;height:25px;background:#e2e2e2;"></div>
<div style="position:absolute;left:343px;top:842px;width:1px;height:25px;background:#e2e2e2;"></div>
<div style="position:absolute;left:469px;top:842px;width:1px;height:25px;background:#e2e2e2;"></div>
<div style="position:absolute;left:594px;top:842px;width:1px;height:25px;background:#e2e2e2;"></div>
<span style="position:absolute;left:-2.0px;top:845.2px;font-size:15.5px;line-height:19px;color:#1a1a1a;white-space:pre;letter-spacing:-0.656px;">Profile</span>
<span style="position:absolute;left:116.0px;top:845.2px;font-size:15.5px;line-height:19px;color:#1a1a1a;white-space:pre;letter-spacing:-0.001px;">Account</span>
<span style="position:absolute;left:243.0px;top:845.2px;font-size:15.5px;line-height:19px;color:#1a1a1a;white-space:pre;letter-spacing:-0.836px;">Balance</span>
<span style="position:absolute;left:374.0px;top:845.2px;font-size:15.5px;line-height:19px;color:#1a1a1a;white-space:pre;letter-spacing:-0.216px;">Equity</span>
<span style="position:absolute;left:488.0px;top:845.2px;font-size:15.5px;line-height:19px;color:#1a1a1a;white-space:pre;letter-spacing:-0.070px;">Open P/L</span>
<div style="position:absolute;left:0px;top:867px;width:820px;height:57px;background:#000000;"></div>
<div style="position:absolute;left:0px;top:867px;width:216px;height:24px;background:#151515;"></div>
<div style="position:absolute;left:216px;top:867px;width:604px;height:24px;background:#0d0d0d;"></div>
<div style="position:absolute;left:0px;top:891px;width:216px;height:32px;background:#070707;"></div>
<div style="position:absolute;left:0px;top:868px;width:91px;height:22px;background:#141414;border:1px solid #d8d8d8;border-left:none;box-sizing:border-box;"></div>
<div style="position:absolute;left:91px;top:867px;width:1.5px;height:25px;background:#8a8a8a;"></div>
<div style="position:absolute;left:0px;top:924px;width:820px;height:6px;background:#ececec;"></div>
<div style="position:absolute;left:0px;top:926px;width:820px;height:1px;background:#c8c8c8;"></div>
<div style="position:absolute;left:0px;top:930px;width:820px;height:43px;background:#ffffff;"></div>
<div style="position:absolute;left:655.5px;top:931px;width:1px;height:41px;background:#dcdcdc;"></div>
<div style="position:absolute;left:0px;top:973px;width:820px;height:33px;background:#f0f0f0;"></div>
<div style="position:absolute;left:0px;top:972.5px;width:820px;height:1px;background:#dcdcdc;"></div>
<div style="position:absolute;left:0px;top:1005.5px;width:820px;height:1.8px;background:#f2b880;"></div>
<svg width="820" height="1047" fill="none" stroke="#333" stroke-width="1.5"><path d="M10.5 943 V960"/><rect x="9.0" y="941.0" width="3" height="3" fill="#fff" stroke="#333" stroke-width="1"/><rect x="9.0" y="959.0" width="3" height="3" fill="#fff" stroke="#333" stroke-width="1"/><path d="M31 953 L41 943 M36 961 L47 950 M31 953 L36 961 M41 943 L47 950"/><rect x="29.5" y="951.5" width="3" height="3" fill="#fff" stroke="#333" stroke-width="1"/><rect x="39.5" y="941.5" width="3" height="3" fill="#fff" stroke="#333" stroke-width="1"/><rect x="34.5" y="958.5" width="3" height="3" fill="#fff" stroke="#333" stroke-width="1"/><rect x="45.5" y="948.5" width="3" height="3" fill="#fff" stroke="#333" stroke-width="1"/><rect x="32.5" y="955.5" width="3" height="3" fill="#fff" stroke="#333" stroke-width="1"/><rect x="42.5" y="944.5" width="3" height="3" fill="#fff" stroke="#333" stroke-width="1"/><path d="M60 957 L72 943 M64 961 L76 947"/><rect x="58.5" y="955.5" width="3" height="3" fill="#fff" stroke="#333" stroke-width="1"/><rect x="70.5" y="941.5" width="3" height="3" fill="#fff" stroke="#333" stroke-width="1"/><rect x="62.5" y="958.5" width="3" height="3" fill="#fff" stroke="#333" stroke-width="1"/><rect x="74.5" y="945.5" width="3" height="3" fill="#fff" stroke="#333" stroke-width="1"/><path d="M89 959 L96 952 M93 948 L99 957 M93 948 L100 942 M96 952 L104 945 M99 957 L106 950"/><rect x="87.5" y="957.5" width="3" height="3" fill="#fff" stroke="#333" stroke-width="1"/><rect x="94.5" y="950.5" width="3" height="3" fill="#fff" stroke="#333" stroke-width="1"/><path d="M115 940 V963" stroke="#9a9a9a" stroke-width="1"/><path d="M127 945 H145"/><rect x="125.5" y="943.5" width="3" height="3" fill="#fff" stroke="#333" stroke-width="1"/><rect x="143.5" y="943.5" width="3" height="3" fill="#fff" stroke="#333" stroke-width="1"/><path d="M127 951.5 H145"/><rect x="125.5" y="950.0" width="3" height="3" fill="#fff" stroke="#333" stroke-width="1"/><rect x="143.5" y="950.0" width="3" height="3" fill="#fff" stroke="#333" stroke-width="1"/><path d="M127 958 H145"/><rect x="125.5" y="956.5" width="3" height="3" fill="#fff" stroke="#333" stroke-width="1"/><rect x="143.5" y="956.5" width="3" height="3" fill="#fff" stroke="#333" stroke-width="1"/><path d="M156 958 H173 M156 958 L168 947"/><path d="M156 958 L170 942 M156 958 L172 952" stroke-dasharray="1.5 1.5" stroke-width="1.2"/><rect x="154.5" y="956.5" width="3" height="3" fill="#fff" stroke="#333" stroke-width="1"/><rect x="171.5" y="956.5" width="3" height="3" fill="#fff" stroke="#333" stroke-width="1"/><path d="M185 958 L192 951 L196 954"/><path d="M203 946 H197 V958 H203 M197 952 H202" stroke-width="1.6"/><rect x="183.5" y="956.5" width="3" height="3" fill="#fff" stroke="#333" stroke-width="1"/><rect x="190.5" y="949.5" width="3" height="3" fill="#fff" stroke="#333" stroke-width="1"/><path d="M215 958 L231 943"/><path d="M214 948 Q224 948 227 960 M214 953 Q220 953 222 960"/><rect x="213.5" y="957.5" width="3" height="3" fill="#fff" stroke="#333" stroke-width="1"/><rect x="229.5" y="941.5" width="3" height="3" fill="#fff" stroke="#333" stroke-width="1"/><path d="M244 943 V960"/><rect x="242.5" y="941.0" width="3" height="3" fill="#fff" stroke="#333" stroke-width="1"/><rect x="242.5" y="959.0" width="3" height="3" fill="#fff" stroke="#333" stroke-width="1"/><path d="M250 943 V960"/><rect x="248.5" y="941.0" width="3" height="3" fill="#fff" stroke="#333" stroke-width="1"/><rect x="248.5" y="959.0" width="3" height="3" fill="#fff" stroke="#333" stroke-width="1"/><path d="M257 943 V960"/><rect x="255.5" y="941.0" width="3" height="3" fill="#fff" stroke="#333" stroke-width="1"/><rect x="255.5" y="959.0" width="3" height="3" fill="#fff" stroke="#333" stroke-width="1"/><path d="M271 943 L279 950 M282 943 V960 M288 943 V960 M279 950 H282"/><rect x="269.5" y="941.0" width="3" height="3" fill="#fff" stroke="#333" stroke-width="1"/><rect x="277.5" y="948.5" width="3" height="3" fill="#fff" stroke="#333" stroke-width="1"/><rect x="280.5" y="941.0" width="3" height="3" fill="#fff" stroke="#333" stroke-width="1"/><rect x="286.5" y="941.0" width="3" height="3" fill="#fff" stroke="#333" stroke-width="1"/><rect x="280.5" y="959.0" width="3" height="3" fill="#fff" stroke="#333" stroke-width="1"/><rect x="286.5" y="959.0" width="3" height="3" fill="#fff" stroke="#333" stroke-width="1"/><path d="M298.7 940 V963" stroke="#9a9a9a" stroke-width="1"/><path d="M311 960 L328 943" stroke-width="1.6"/><path d="M311 960 L319 944 M311 960 L327 953" stroke-dasharray="1.5 1.5" stroke-width="1.2"/><rect x="309.5" y="958.5" width="3" height="3" fill="#fff" stroke="#333" stroke-width="1"/><rect x="339" y="942" width="19" height="19" stroke-width="1.5"/><path d="M345 944 V959 M352 944 V959 M341 948.5 H356 M341 954.5 H356" stroke-width="1.6"/><path d="M366.6 940 V963" stroke="#9a9a9a" stroke-width="1"/><path d="M377 946 H382 M377 950 H382 M377 954 H382 M377 958 H382" stroke-width="1.2"/><rect x="384" y="944" width="13" height="15" stroke-width="1.4"/><path d="M386 947 H395" stroke-width="2"/><path d="M386.5 951.5 H395 M386.5 954.5 H395 M386.5 957 H395" stroke-width="1.4" stroke-dasharray="2 1.2"/><rect x="437" y="944.5" width="16" height="14"/><rect x="435.5" y="957.0" width="3" height="3" fill="#fff" stroke="#333" stroke-width="1"/><rect x="451.5" y="943.0" width="3" height="3" fill="#fff" stroke="#333" stroke-width="1"/><ellipse cx="474" cy="952" rx="9" ry="6.5"/><rect x="463.5" y="950.5" width="3" height="3" fill="#fff" stroke="#333" stroke-width="1"/><path d="M494 960 Q510 958 511 944"/><rect x="492.5" y="958.5" width="3" height="3" fill="#fff" stroke="#333" stroke-width="1"/><rect x="509.5" y="942.5" width="3" height="3" fill="#fff" stroke="#333" stroke-width="1"/><path d="M530.3 944.5 H533.7 V953 H536.5 L532 959.5 L527.5 953 H530.3 Z" stroke-width="1.3"/><path d="M559.3 959.5 H562.7 V951 H565.5 L561 944.5 L556.5 951 H559.3 Z" stroke-width="1.3"/><path d="M579 940 V963" stroke="#9a9a9a" stroke-width="1"/><path d="M592.5 944 V953 Q592.5 960 599.5 960 Q606.5 960 606.5 953 V944 H602 V953 Q602 956 599.5 956 Q597 956 597 953 V944 Z" fill="#e07260" stroke="#c85a48" stroke-width="1"/><rect x="592.5" y="943" width="4.5" height="3" fill="#ddd" stroke="#888" stroke-width=".6"/><rect x="602" y="943" width="4.5" height="3" fill="#ddd" stroke="#888" stroke-width=".6"/><path d="M620 957 L631 945 L636 949 L625 961 Z" fill="#8cc04a" stroke="#5a8a2a" stroke-width="1"/><path d="M620 957 L618 962 L625 961 Z" fill="#e8b0b0" stroke="#b07070" stroke-width=".8"/><rect x="630" y="954" width="9" height="7.5" fill="#e8c050" stroke="#a88020" stroke-width="1"/><path d="M632 954 V951.5 Q634.5 948 637 951.5 V954" stroke="#888" stroke-width="1.3"/><path d="M660.5 934 V971" stroke="#b0b0b0" stroke-width="1.4" stroke-dasharray="1.4 1.8"/></svg>
<span style="position:absolute;left:409.0px;top:940.0px;font-size:20px;line-height:24px;color:#222;white-space:pre;font-weight:bold;font-family:'Liberation Serif',serif;">T</span>
<div style="position:absolute;left:669px;top:936px;width:160px;height:29px;background:#ffffff;border:1px solid #8a8a8a;box-sizing:border-box;"></div>
<span style="position:absolute;left:677.0px;top:940.5px;font-size:15px;line-height:19px;color:#222;white-space:pre;letter-spacing:0.005px;">Type a symbol/interva</span>
<div style="position:absolute;left:819px;top:401px;width:1177px;height:645px;background:#ffffff;border:1px solid #eeb27a;box-sizing:border-box;box-shadow:0 0 6px rgba(0,0,0,.25);"></div>
<span style="position:absolute;left:830.0px;top:411.5px;font-size:15px;line-height:19px;color:#111;white-space:pre;letter-spacing:-0.300px;">EURUSD.FXCM : _Metod_Bagovina Back-Testing Strategy Performance Report</span>
<svg width="2000" height="1047" fill="none" stroke="#222" stroke-width="1.3"><path d="M1845 420.5 H1858"/><rect x="1902.5" y="414.5" width="11" height="11"/><path d="M1960 414 L1972 426 M1972 414 L1960 426"/></svg>
<div style="position:absolute;left:820px;top:1016px;width:1175px;height:28px;background:#f0f0f0;"></div>
<div style="position:absolute;left:820px;top:1044px;width:1175px;height:2px;background:#f0b070;"></div>
<svg width="2000" height="1047" fill="#b0b0b0"><rect x="1988" y="1036" width="2" height="2"/><rect x="1985" y="1039" width="2" height="2"/><rect x="1988" y="1039" width="2" height="2"/><rect x="1982" y="1042" width="2" height="2"/><rect x="1985" y="1042" width="2" height="2"/><rect x="1988" y="1042" width="2" height="2"/></svg>
<div style="position:absolute;left:1054px;top:442.5px;width:29px;height:27px;background:#cce4f8;border:1px solid #9cc8ec;box-sizing:border-box;"></div>
<svg width="2000" height="1047" fill="none"><path d="M830 456.2 L838.3 448.8 V463.6 Z" fill="#8ccaee" stroke="#3a7fc0" stroke-width="1" stroke-linejoin="round"/><path d="M840.6 451.5 V461 M843 452.5 V460" stroke="#2a6aa8" stroke-width="1.3"/><path d="M857.5 454.5 H864.5 L861 458.5 Z" fill="#222"/><path d="M892.5 456.2 L884.2 448.8 V463.6 Z" fill="#8ccaee" stroke="#3a7fc0" stroke-width="1" stroke-linejoin="round"/><path d="M881.9 451.5 V461 M879.5 452.5 V460" stroke="#2a6aa8" stroke-width="1.3"/><path d="M905.5 454.5 H912.5 L909 458.5 Z" fill="#222"/><path d="M921 446 V468" stroke="#a0a0a0" stroke-width="1"/><rect x="934" y="448" width="15" height="15" rx="1" fill="#3a9a8a" stroke="#1c5a50" stroke-width="1.2"/><rect x="937" y="449" width="9" height="6" fill="#d8f0ea"/><rect x="938" y="458" width="7" height="5" fill="#c8c8c8" stroke="#1c5a50" stroke-width=".6"/><path d="M964 447 H974 L978 451 V464 H964 Z" fill="#dce8fa" stroke="#6a8ad0" stroke-width="1.1"/><circle cx="970" cy="455" r="4.2" fill="#eef4ff" stroke="#4a70c0" stroke-width="1.4"/><path d="M967 458.5 L963 463" stroke="#c05030" stroke-width="2"/><path d="M994 447 H1003 L1005 455 H996 Z" fill="#e8f2fa" stroke="#a8b8c8" stroke-width="1"/><path d="M991 455 H1007 L1009 460 V464 H993 L991 460 Z" fill="#c8c8c8" stroke="#8a8a8a" stroke-width="1"/><rect x="995" y="459" width="10" height="3" fill="#f4f4f4" stroke="#8a8a8a" stroke-width=".6"/><rect x="1019.5" y="448" width="18" height="15" fill="#f4ecec" stroke="#3a3a3a" stroke-width="1.3"/><rect x="1019.5" y="448" width="18" height="3.5" fill="#3a3a3a"/><path d="M1025 452 V463 M1031 452 V463 M1020 457 H1037" stroke="#c05050" stroke-width="1"/><rect x="1032.5" y="453" width="3.5" height="3" fill="#333"/><rect x="1032.5" y="458.5" width="3.5" height="3" fill="#333"/><path d="M1047 446 V468" stroke="#a0a0a0" stroke-width="1"/><path d="M1068.5 446 V466 M1059 457 H1079" stroke="#3a4a5a" stroke-width="2"/><path d="M1069.5 447 V465 M1060 458 H1078" stroke="#5aa0d8" stroke-width="1"/><path d="M1091 456 L1089 452 Q1088 449.5 1090.5 450 L1093 454 V448.5 Q1094.5 446.5 1096 448.5 V453 V447.5 Q1097.5 445.5 1099 447.5 V453 V448.5 Q1100.5 447 1102 448.5 V454.5 V451 Q1103.5 449.5 1104.5 451.5 V458 Q1104.5 463 1101 466 H1094 Q1092 462 1091 456 Z" fill="#fff" stroke="#111" stroke-width="1.3" stroke-linejoin="round"/><circle cx="1123.5" cy="453.5" r="5.6" fill="#e8f0fa" stroke="#1a2a4a" stroke-width="1.6"/><path d="M1120.5 453.5 H1126.5 M1123.5 450.5 V456.5" stroke="#111" stroke-width="1.8"/><path d="M1127.5 458 L1133 464" stroke="#b06040" stroke-width="3" stroke-linecap="round"/><circle cx="1152" cy="453.5" r="5.4" fill="#f4f4f4" stroke="#a0a0a0" stroke-width="1.5"/><path d="M1149.5 453.5 H1154.5" stroke="#909090" stroke-width="1.8"/><path d="M1156.5 458 L1162 464" stroke="#b4b4b4" stroke-width="3" stroke-linecap="round"/><path d="M1177.5 455 Q1176.5 462.5 1183 463 Q1189.5 462.5 1189 455.5 Q1188.5 452 1185 450.5" stroke="#b4b4b4" stroke-width="2.4"/><path d="M1183.5 452.5 L1190.5 448 L1190 455.5" fill="none" stroke="#b4b4b4" stroke-width="1.8"/><path d="M1176.5 448 l1.6 1.6 m0 -1.6 l-1.6 1.6" stroke="#b4b4b4" stroke-width="1"/></svg>
<div style="position:absolute;left:820px;top:474px;width:1214px;height:0px;"></div>
<div style="position:absolute;left:821px;top:474.5px;width:1212.5px;height:0px;"></div>
<div style="position:absolute;left:821px;top:474.5px;width:212.5px;height:541.5px;background:#ffffff;border:1px solid #a8a8a8;border-left:none;box-sizing:border-box;"></div>
<div style="position:absolute;left:821px;top:474.5px;width:212.5px;height:2px;background:linear-gradient(180deg,#9a9a9a,#e8e8e8);"></div>
<div style="position:absolute;left:894px;top:567px;width:137px;height:22px;background:#e6e6e6;"></div>
<svg width="2000" height="1047" fill="none"><path d="M838.5 495 V849 M838.5 849.5 H852" stroke="#9a9a9a" stroke-width="1" stroke-dasharray="1 1.6"/><path d="M863.5 498 V782" stroke="#9a9a9a" stroke-width="1" stroke-dasharray="1 1.6"/><path d="M844 489.5 H850 M844 804.5 H850 M844 827 H850" stroke="#9a9a9a" stroke-width="1" stroke-dasharray="1 1.6"/><rect x="834.0" y="485.0" width="9" height="9" fill="#fff" stroke="#8a8a8a" stroke-width="1"/><path d="M836.0 489.5 H841.0" stroke="#3a5a9a" stroke-width="1.2"/><rect x="834.0" y="800.0" width="9" height="9" fill="#fff" stroke="#8a8a8a" stroke-width="1"/><path d="M836.0 804.5 H841.0" stroke="#3a5a9a" stroke-width="1.2"/><path d="M838.5 802.0 V807.0" stroke="#3a5a9a" stroke-width="1.2"/><rect x="834.0" y="822.5" width="9" height="9" fill="#fff" stroke="#8a8a8a" stroke-width="1"/><path d="M836.0 827.0 H841.0" stroke="#3a5a9a" stroke-width="1.2"/><path d="M838.5 824.5 V829.5" stroke="#3a5a9a" stroke-width="1.2"/><path d="M865 510.8 H876" stroke="#9a9a9a" stroke-width="1" stroke-dasharray="1 1.6"/><rect x="878.5" y="505.3" width="11" height="11" fill="#fbeeee" stroke="#a05050" stroke-width="1.2"/><path d="M882.5 505.8 V515.8 M879.0 509.3 H889.0" stroke="#c06060" stroke-width="1"/><path d="M886.0 505.8 V515.8 M879.0 512.8 H889.0" stroke="#d08080" stroke-width=".8"/><path d="M865 533.4 H876" stroke="#9a9a9a" stroke-width="1" stroke-dasharray="1 1.6"/><rect x="878.5" y="527.9" width="11" height="11" fill="#fbeeee" stroke="#a05050" stroke-width="1.2"/><path d="M882.5 528.4 V538.4 M879.0 531.9 H889.0" stroke="#c06060" stroke-width="1"/><path d="M886.0 528.4 V538.4 M879.0 535.4 H889.0" stroke="#d08080" stroke-width=".8"/><path d="M865 556.0 H876" stroke="#9a9a9a" stroke-width="1" stroke-dasharray="1 1.6"/><rect x="878.5" y="550.5" width="11" height="11" fill="#fbeeee" stroke="#a05050" stroke-width="1.2"/><path d="M882.5 551.0 V561.0 M879.0 554.5 H889.0" stroke="#c06060" stroke-width="1"/><path d="M886.0 551.0 V561.0 M879.0 558.0 H889.0" stroke="#d08080" stroke-width=".8"/><path d="M865 578.7 H876" stroke="#9a9a9a" stroke-width="1" stroke-dasharray="1 1.6"/><rect x="878.5" y="573.2" width="11" height="11" fill="#f4f0e8" stroke="#555" stroke-width="1.3"/><path d="M880.5 581.2 L883.0 577.2 L885.0 579.7 L887.5 575.7" stroke="#d06030" stroke-width="1.3"/><path d="M865 601.3 H876" stroke="#9a9a9a" stroke-width="1" stroke-dasharray="1 1.6"/><rect x="878.5" y="595.8" width="11" height="11" fill="#f4f0e8" stroke="#555" stroke-width="1.3"/><path d="M880.5 603.8 L883.0 599.8 L885.0 602.3 L887.5 598.3" stroke="#d06030" stroke-width="1.3"/><path d="M865 623.9 H876" stroke="#9a9a9a" stroke-width="1" stroke-dasharray="1 1.6"/><rect x="878.5" y="618.4" width="11" height="11" fill="#f4f0e8" stroke="#555" stroke-width="1.3"/><path d="M880.5 626.4 L883.0 622.4 L885.0 624.9 L887.5 620.9" stroke="#d06030" stroke-width="1.3"/><path d="M865 646.5 H876" stroke="#9a9a9a" stroke-width="1" stroke-dasharray="1 1.6"/><rect x="878.5" y="641.0" width="11" height="11" fill="#f4f0e8" stroke="#555" stroke-width="1.3"/><path d="M880.5 649.0 L883.0 645.0 L885.0 647.5 L887.5 643.5" stroke="#d06030" stroke-width="1.3"/><path d="M865 669.1 H876" stroke="#9a9a9a" stroke-width="1" stroke-dasharray="1 1.6"/><rect x="878.5" y="663.6" width="11" height="11" fill="#f4f0e8" stroke="#555" stroke-width="1.3"/><path d="M880.5 671.6 L883.0 667.6 L885.0 670.1 L887.5 666.1" stroke="#d06030" stroke-width="1.3"/><path d="M865 691.8 H876" stroke="#9a9a9a" stroke-width="1" stroke-dasharray="1 1.6"/><rect x="878.5" y="686.3" width="11" height="11" fill="#f4f0e8" stroke="#555" stroke-width="1.3"/><path d="M880.5 694.3 L883.0 690.3 L885.0 692.8 L887.5 688.8" stroke="#d06030" stroke-width="1.3"/><path d="M865 714.4 H876" stroke="#9a9a9a" stroke-width="1" stroke-dasharray="1 1.6"/><rect x="878.5" y="708.9" width="11" height="11" fill="#f4f0e8" stroke="#555" stroke-width="1.3"/><path d="M880.5 716.9 L883.0 712.9 L885.0 715.4 L887.5 711.4" stroke="#d06030" stroke-width="1.3"/><path d="M865 737.0 H876" stroke="#9a9a9a" stroke-width="1" stroke-dasharray="1 1.6"/><rect x="878.5" y="731.5" width="11" height="11" fill="#f4f0e8" stroke="#555" stroke-width="1.3"/><path d="M880.5 739.5 L883.0 735.5 L885.0 738.0 L887.5 734.0" stroke="#d06030" stroke-width="1.3"/><path d="M865 759.6 H876" stroke="#9a9a9a" stroke-width="1" stroke-dasharray="1 1.6"/><rect x="878.5" y="754.1" width="11" height="11" fill="#f4f0e8" stroke="#555" stroke-width="1.3"/><path d="M880.5 762.1 L883.0 758.1 L885.0 760.6 L887.5 756.6" stroke="#d06030" stroke-width="1.3"/><path d="M865 782.2 H876" stroke="#9a9a9a" stroke-width="1" stroke-dasharray="1 1.6"/><rect x="878.5" y="776.7" width="11" height="11" fill="#f4f0e8" stroke="#555" stroke-width="1.3"/><path d="M880.5 784.7 L883.0 780.7 L885.0 783.2 L887.5 779.2" stroke="#d06030" stroke-width="1.3"/><rect x="854.0" y="844.5" width="11" height="11" fill="#fbeeee" stroke="#a05050" stroke-width="1.2"/><path d="M858.0 845.0 V855.0 M854.5 848.5 H864.5" stroke="#c06060" stroke-width="1"/><path d="M861.5 845.0 V855.0 M854.5 852.0 H864.5" stroke="#d08080" stroke-width=".8"/><rect x="821" y="993" width="212" height="21" fill="#f0f0f0"/><rect x="844" y="995" width="93" height="17" fill="#cdcdcd"/><path d="M836 997.5 L830.5 1003 L836 1008.5 M1015.5 997.5 L1021 1003 L1015.5 1008.5" stroke="#505050" stroke-width="2.2"/></svg>
<span style="position:absolute;left:853.0px;top:477.5px;font-size:15px;line-height:19px;color:#1a1a1a;white-space:pre;letter-spacing:-0.253px;">Strategy Analysis</span>
<span style="position:absolute;left:897.0px;top:500.3px;font-size:15px;line-height:19px;color:#1a1a1a;white-space:pre;letter-spacing:-0.142px;">Strategy Performanc</span>
<span style="position:absolute;left:897.0px;top:522.9px;font-size:15px;line-height:19px;color:#1a1a1a;white-space:pre;letter-spacing:-0.209px;">Performance Ratios</span>
<span style="position:absolute;left:897.0px;top:545.5px;font-size:15px;line-height:19px;color:#1a1a1a;white-space:pre;letter-spacing:-0.081px;">Time Analysis</span>
<span style="position:absolute;left:897.0px;top:568.2px;font-size:15px;line-height:19px;color:#1a1a1a;white-space:pre;letter-spacing:-0.196px;">Equity Curve Detaile</span>
<span style="position:absolute;left:897.0px;top:590.8px;font-size:15px;line-height:19px;color:#1a1a1a;white-space:pre;letter-spacing:-0.196px;">Equity Curve Detaile</span>
<span style="position:absolute;left:897.0px;top:613.4px;font-size:15px;line-height:19px;color:#1a1a1a;white-space:pre;letter-spacing:-0.196px;">Equity Curve Detaile</span>
<span style="position:absolute;left:897.0px;top:636.0px;font-size:15px;line-height:19px;color:#1a1a1a;white-space:pre;letter-spacing:-0.196px;">Equity Curve Detaile</span>
<span style="position:absolute;left:897.0px;top:658.6px;font-size:15px;line-height:19px;color:#1a1a1a;white-space:pre;letter-spacing:-0.142px;">Equity Run-up &amp; Dra</span>
<span style="position:absolute;left:897.0px;top:681.3px;font-size:15px;line-height:19px;color:#1a1a1a;white-space:pre;letter-spacing:-0.142px;">Equity Run-up &amp; Dra</span>
<span style="position:absolute;left:897.0px;top:703.9px;font-size:15px;line-height:19px;color:#1a1a1a;white-space:pre;letter-spacing:-0.392px;">Equity Curve Close T</span>
<span style="position:absolute;left:897.0px;top:726.5px;font-size:15px;line-height:19px;color:#1a1a1a;white-space:pre;letter-spacing:-0.392px;">Equity Curve Close T</span>
<span style="position:absolute;left:897.0px;top:749.1px;font-size:15px;line-height:19px;color:#1a1a1a;white-space:pre;letter-spacing:0.048px;">Buy &amp; Hold Return</span>
<span style="position:absolute;left:897.0px;top:771.7px;font-size:15px;line-height:19px;color:#1a1a1a;white-space:pre;letter-spacing:0.199px;">Value Added Month</span>
<span style="position:absolute;left:853.0px;top:794.0px;font-size:15px;line-height:19px;color:#1a1a1a;white-space:pre;letter-spacing:-0.217px;">Trade Analysis</span>
<span style="position:absolute;left:853.0px;top:816.5px;font-size:15px;line-height:19px;color:#1a1a1a;white-space:pre;letter-spacing:-0.170px;">Periodical Analysis</span>
<span style="position:absolute;left:873.0px;top:839.5px;font-size:15px;line-height:19px;color:#1a1a1a;white-space:pre;letter-spacing:-0.314px;">Settings</span>
<div style="position:absolute;left:1033px;top:476px;width:8px;height:517px;background:#ffffff;"></div>
<div style="position:absolute;left:1033px;top:474.5px;width:1px;height:541.5px;background:#a8a8a8;"></div>
<div style="position:absolute;left:1040.5px;top:474.5px;width:953px;height:541.5px;background:#ffffff;border:1px solid #a8a8a8;box-sizing:border-box;"></div>
<div style="position:absolute;left:1041.5px;top:475.5px;width:951px;height:3px;background:linear-gradient(180deg,#9a9a9a,#f4f4f4);"></div>
<div style="position:absolute;left:1042px;top:479px;width:951px;height:40.5px;background:#b9b9b9;border-bottom:1px solid #8a8a8a;box-sizing:border-box;"></div>
<span style="position:absolute;left:1049.0px;top:486.5px;font-size:20px;line-height:24px;color:#ffffff;white-space:pre;letter-spacing:0.614px;font-weight:bold;">Equity Curve Detailed</span>
<svg width="2000" height="1047" fill="none"><path d="M1143 603.7 H1976" stroke="#444" stroke-width="1.1" stroke-dasharray="4.5 3.2"/><path d="M1143 679.3 H1976" stroke="#444" stroke-width="1.1" stroke-dasharray="4.5 3.2"/><path d="M1143 754.6 H1976" stroke="#444" stroke-width="1.1" stroke-dasharray="4.5 3.2"/><path d="M1143 830.8 H1976" stroke="#444" stroke-width="1.1" stroke-dasharray="4.5 3.2"/><path d="M1143 906.5 H1976" stroke="#333" stroke-width="1.4" stroke-dasharray="4 3"/><path d="M1357.0 538 V926" stroke="#444" stroke-width="1.1" stroke-dasharray="4.5 3.2"/><path d="M1357.0 926 V932" stroke="#222" stroke-width="1.4"/><path d="M1564.3 538 V926" stroke="#444" stroke-width="1.1" stroke-dasharray="4.5 3.2"/><path d="M1564.3 926 V932" stroke="#222" stroke-width="1.4"/><path d="M1770.7 538 V926" stroke="#444" stroke-width="1.1" stroke-dasharray="4.5 3.2"/><path d="M1770.7 926 V932" stroke="#222" stroke-width="1.4"/><path d="M1150 538 V926" stroke="#222" stroke-width="1.6" stroke-dasharray="5 2.5"/><path d="M1150 926 H1976 M1150 926 V932" stroke="#111" stroke-width="1.6"/><path d="M1386 996.5 H1410" stroke="#3a8a3a" stroke-width="1.3"/><path d="M1532 996.5 H1556" stroke="#d83030" stroke-width="1.3"/></svg>
<span style="position:absolute;left:1086.0px;top:590.0px;font-size:14px;line-height:18px;color:#222;white-space:pre;letter-spacing:-0.094px;">110 000</span>
<span style="position:absolute;left:1086.0px;top:665.5px;font-size:14px;line-height:18px;color:#222;white-space:pre;letter-spacing:-0.267px;">107 500</span>
<span style="position:absolute;left:1086.0px;top:741.0px;font-size:14px;line-height:18px;color:#222;white-space:pre;letter-spacing:-0.267px;">105 000</span>
<span style="position:absolute;left:1086.0px;top:817.0px;font-size:14px;line-height:18px;color:#222;white-space:pre;letter-spacing:-0.267px;">102 500</span>
<span style="position:absolute;left:1086.0px;top:892.5px;font-size:14px;line-height:18px;color:#222;white-space:pre;letter-spacing:-0.267px;">100 000</span>
<span style="position:absolute;left:1294.0px;top:939.5px;font-size:14px;line-height:18px;color:#222;white-space:pre;letter-spacing:-0.247px;">01.06.2016 04:00:00</span>
<span style="position:absolute;left:1501.0px;top:939.5px;font-size:14px;line-height:18px;color:#222;white-space:pre;letter-spacing:-0.247px;">25.10.2016 08:00:00</span>
<span style="position:absolute;left:1707.0px;top:939.5px;font-size:14px;line-height:18px;color:#222;white-space:pre;letter-spacing:-0.247px;">20.03.2017 14:00:00</span>
<span style="position:absolute;left:1493.0px;top:964.8px;font-size:14.5px;line-height:18px;color:#222;white-space:pre;letter-spacing:-0.209px;">Date</span>
<span style="position:absolute;left:1411.0px;top:986.8px;font-size:14.5px;line-height:18px;color:#222;white-space:pre;letter-spacing:0.222px;">Equity High ($)</span>
<span style="position:absolute;left:1558.0px;top:986.8px;font-size:14.5px;line-height:18px;color:#222;white-space:pre;letter-spacing:0.102px;">Equity Low ($)</span>
<span style="position:absolute;left:1072px;top:730px;font-size:14.5px;color:#222;white-space:pre;transform:translate(-50%,-50%) rotate(-90deg);letter-spacing:-0.2px;">Equity ($)</span>
<svg width="2000" height="1047" fill="none" stroke-linejoin="miter"><path d="M1149.9 906.3 L1150.3 899.5 L1150.3 896.8 L1150.7 899.5 L1150.7 892.6 L1152.2 900.2 L1152.2 896.0 L1152.7 900.2 L1153.0 904.0 L1153.0 901.7 L1153.4 904.0 L1153.8 907.8 L1154.2 898.2 L1154.2 896.0 L1154.6 898.2 L1154.5 888.7 L1154.9 883.8 L1154.9 881.4 L1155.3 883.8 L1155.3 878.8 L1156.1 887.0 L1156.1 883.2 L1156.5 887.0 L1157.6 903.3 L1158.4 897.7 L1158.4 894.7 L1158.8 897.7 L1159.9 886.5 L1161.4 878.8 L1162.2 887.2 L1162.2 883.6 L1162.6 887.2 L1162.9 895.6 L1164.4 878.3 L1164.4 872.8 L1164.8 878.3 L1165.2 869.6 L1166.0 870.6 L1166.0 868.0 L1166.4 870.6 L1166.7 871.7 L1166.7 868.4 L1167.1 871.7 L1167.5 872.7 L1169.0 856.7 L1169.0 852.3 L1169.5 856.7 L1170.6 840.6 L1171.3 852.5 L1171.3 848.2 L1171.8 852.5 L1172.1 864.3 L1175.9 865.1 L1176.3 857.5 L1176.3 855.1 L1176.7 857.5 L1176.7 849.8 L1177.3 862.8 L1177.3 858.0 L1177.7 862.8 L1177.9 875.8 L1178.5 868.7 L1178.5 865.3 L1178.9 868.7 L1179.1 861.5 L1179.1 857.7 L1179.5 861.5 L1179.7 854.4 L1182.8 854.4 L1183.2 858.2 L1183.2 853.0 L1183.6 858.2 L1183.5 862.0 L1185.1 837.6 L1185.8 830.7 L1185.8 826.4 L1186.2 830.7 L1186.6 823.8 L1187.4 821.8 L1187.4 816.3 L1187.8 821.8 L1188.9 817.7 L1189.3 822.3 L1189.3 816.4 L1189.7 822.3 L1189.7 826.9 L1192.7 826.9 L1193.2 825.3 L1193.2 821.6 L1193.7 825.3 L1193.8 823.8 L1195.0 840.6 L1195.4 855.9 L1195.4 851.9 L1195.8 855.9 L1195.8 871.2 L1196.2 860.5 L1196.2 855.8 L1196.6 860.5 L1196.5 849.8 L1199.6 849.8 L1201.1 825.3 L1201.5 826.1 L1201.5 820.6 L1201.9 826.1 L1201.9 826.9 L1202.7 842.1 L1202.7 837.3 L1203.1 842.1 L1203.4 857.4 L1203.8 853.6 L1203.8 849.2 L1204.2 853.6 L1204.2 849.8 L1208.8 849.8 L1209.2 848.2 L1209.2 842.9 L1209.6 848.2 L1209.5 846.7 L1211.0 863.0 L1211.0 858.3 L1211.4 863.0 L1211.8 871.2 L1212.5 870.4 L1212.5 865.6 L1213.0 870.4 L1213.3 869.6 L1214.4 892.6 L1215.6 871.2 L1218.7 871.2 L1219.4 865.1 L1220.2 871.2 L1220.2 867.6 L1220.6 871.2 L1221.0 877.3 L1222.5 889.5 L1223.1 878.0 L1223.1 874.1 L1223.5 878.0 L1223.7 866.6 L1230.1 866.6 L1230.5 872.7 L1230.5 870.1 L1230.9 872.7 L1230.9 878.8 L1231.1 867.8 L1231.1 862.7 L1231.5 867.8 L1231.2 856.7 L1234.0 856.7 L1234.8 862.4 L1234.8 859.3 L1235.2 862.4 L1235.5 868.1 L1236.3 862.5 L1236.3 857.0 L1236.7 862.5 L1237.0 856.9 L1237.0 853.0 L1237.4 856.9 L1237.8 851.3 L1238.5 864.3 L1238.5 858.8 L1239.0 864.3 L1239.3 877.3 L1241.6 833.7 L1242.2 849.4 L1242.2 845.7 L1242.6 849.4 L1242.7 865.1 L1243.4 873.0 L1243.4 867.4 L1243.8 873.0 L1244.7 888.7 L1245.2 880.0 L1245.2 877.2 L1245.6 880.0 L1245.7 871.2 L1246.3 876.5 L1246.3 873.5 L1246.8 876.5 L1247.0 881.9 L1247.7 886.2 L1247.7 881.8 L1248.1 886.2 L1248.5 890.6 L1248.5 888.5 L1248.9 890.6 L1249.2 894.9 L1249.6 880.0 L1249.6 876.5 L1250.0 880.0 L1250.0 865.1 L1250.8 856.7 L1250.8 850.9 L1251.2 856.7 L1252.3 839.9 L1252.8 847.1 L1252.8 842.6 L1253.2 847.1 L1253.4 854.4 L1254.8 837.2 L1254.8 831.6 L1255.2 837.2 L1256.1 820.0 L1257.6 828.4 L1258.7 817.7 L1258.7 814.0 L1259.1 817.7 L1259.2 812.3 L1261.5 812.3 L1262.2 818.8 L1262.2 814.2 L1262.7 818.8 L1263.0 825.3 L1263.8 816.5 L1263.8 814.2 L1264.2 816.5 L1264.5 807.8 L1265.3 818.8 L1265.3 816.1 L1265.7 818.8 L1266.1 829.9 L1266.7 833.8 L1266.7 831.4 L1267.1 833.8 L1267.3 837.6 L1267.7 825.0 L1267.7 822.3 L1268.1 825.0 L1268.0 812.3 L1273.7 812.3 L1274.1 821.1 L1274.1 817.6 L1274.5 821.1 L1274.5 829.9 L1275.2 839.8 L1275.2 834.3 L1275.7 839.8 L1276.0 849.8 L1277.1 836.0 L1277.7 842.6 L1277.7 839.5 L1278.1 842.6 L1278.4 849.3 L1278.4 845.7 L1278.8 849.3 L1279.0 855.9 L1279.8 865.0 L1279.8 859.6 L1280.2 865.0 L1280.6 874.2 L1282.1 889.5 L1282.1 885.5 L1282.5 889.5 L1282.9 897.1 L1283.7 905.5 L1283.7 903.1 L1284.1 905.5 L1284.4 914.0 L1285.2 906.4 L1285.2 903.2 L1285.6 906.4 L1285.9 898.7 L1287.4 907.8 L1292.0 907.8 L1292.2 902.5 L1292.2 900.3 L1292.6 902.5 L1292.3 897.1 L1292.8 910.9 L1293.0 909.8 L1293.0 907.1 L1293.4 909.8 L1293.2 908.6 L1298.1 908.6 L1298.6 902.7 L1298.6 900.5 L1299.0 902.7 L1299.2 896.9 L1299.2 891.0 L1299.6 896.9 L1299.7 891.0 L1301.2 912.4 L1302.7 888.7 L1305.8 888.0 L1306.2 878.8 L1306.2 875.3 L1306.6 878.8 L1306.5 869.6 L1307.2 868.9 L1307.2 863.8 L1307.6 868.9 L1307.8 868.1 L1307.8 863.0 L1308.2 868.1 L1308.5 867.4 L1308.9 879.6 L1308.9 876.6 L1309.3 879.6 L1309.3 891.8 L1311.9 910.1 L1315.7 910.1 L1316.2 918.5 L1322.6 918.5 L1322.9 901.0 L1323.3 921.6 L1323.5 920.0 L1323.5 915.9 L1324.0 920.0 L1323.8 918.5 L1326.7 918.5 L1327.0 921.2 L1327.0 919.0 L1327.4 921.2 L1327.3 923.9 L1328.0 912.8 L1328.0 909.6 L1328.4 912.8 L1328.7 901.7 L1329.5 896.8 L1329.5 891.9 L1329.9 896.8 L1331.0 886.9 L1331.0 881.1 L1331.4 886.9 L1331.7 881.9 L1334.0 877.3 L1334.8 881.9 L1334.8 878.9 L1335.2 881.9 L1335.6 886.5 L1336.3 901.0 L1336.3 898.1 L1336.8 901.0 L1337.1 915.5 L1337.5 906.3 L1337.5 901.8 L1337.9 906.3 L1337.9 897.1 L1340.0 897.1 L1342.0 893.1 L1342.0 888.4 L1342.4 893.1 L1342.7 891.7 L1344.0 903.1 L1344.0 898.4 L1344.4 903.1 L1345.3 914.5 L1346.7 891.7 L1348.0 890.8 L1348.0 888.0 L1348.4 890.8 L1348.7 890.4 L1350.0 878.4 L1350.7 886.4 L1350.7 881.2 L1351.1 886.4 L1351.4 894.4 L1352.7 872.4 L1353.4 871.9 L1353.4 868.2 L1353.8 871.9 L1355.4 870.4 L1356.1 877.8 L1356.1 875.2 L1356.5 877.8 L1356.7 885.1 L1357.3 892.1 L1357.3 886.5 L1357.8 892.1 L1358.0 899.1 L1360.1 898.4 L1361.4 907.8 L1362.1 896.5 L1362.1 891.1 L1362.5 896.5 L1362.7 885.1 L1364.1 878.4 L1365.4 886.4 L1365.4 882.2 L1365.8 886.4 L1366.1 890.4 L1366.8 884.6 L1366.8 882.4 L1367.2 884.6 L1368.1 873.0 L1369.4 865.5 L1369.4 859.7 L1369.8 865.5 L1370.1 861.7 L1374.1 861.0 L1374.5 865.4 L1374.5 859.9 L1375.0 865.4 L1375.0 869.7 L1375.4 853.0 L1377.4 852.3 L1378.1 842.6 L1378.1 839.5 L1378.5 842.6 L1378.8 832.9 L1379.4 822.9 L1379.4 819.9 L1379.8 822.9 L1380.1 812.9 L1380.4 809.5 L1380.4 806.4 L1380.8 809.5 L1380.8 806.2 L1381.1 810.9 L1381.1 808.2 L1381.5 810.9 L1381.4 815.5 L1384.1 815.5 L1385.2 826.2 L1385.7 816.5 L1385.7 812.7 L1386.1 816.5 L1386.1 806.9 L1390.1 806.9 L1390.3 791.8 L1390.3 786.2 L1390.7 791.8 L1390.5 776.7 L1395.1 776.7 L1395.3 768.7 L1395.3 763.0 L1395.7 768.7 L1395.5 760.6 L1396.0 771.3 L1396.0 767.1 L1396.5 771.3 L1396.6 782.0 L1397.3 778.2 L1397.3 776.0 L1397.7 778.2 L1397.9 774.3 L1397.9 771.5 L1398.3 774.3 L1398.6 770.5 L1399.2 782.4 L1399.2 777.1 L1399.6 782.4 L1399.7 794.2 L1400.5 804.9 L1400.5 801.0 L1400.9 804.9 L1401.2 815.6 L1401.6 832.4 L1402.2 822.8 L1402.2 819.5 L1402.6 822.8 L1402.7 813.3 L1403.5 816.1 L1403.5 811.8 L1403.9 816.1 L1405.0 821.7 L1405.6 828.3 L1405.6 824.0 L1406.0 828.3 L1406.2 835.0 L1406.2 831.8 L1406.6 835.0 L1406.8 841.6 L1407.8 817.1 L1408.3 824.0 L1408.3 819.7 L1408.7 824.0 L1408.8 830.9 L1410.4 852.3 L1410.9 857.8 L1410.9 853.4 L1411.3 857.8 L1411.4 863.4 L1412.0 852.5 L1412.0 848.4 L1412.4 852.5 L1412.6 841.6 L1413.7 844.7 L1413.7 840.5 L1414.1 844.7 L1414.2 846.2 L1415.0 834.0 L1415.0 828.2 L1415.4 834.0 L1415.7 821.7 L1417.2 815.6 L1418.8 826.3 L1420.0 809.5 L1421.5 809.5 L1421.8 801.1 L1421.8 796.8 L1422.2 801.1 L1422.1 792.7 L1423.3 809.5 L1424.4 816.6 L1424.4 814.1 L1424.8 816.6 L1424.9 820.2 L1425.5 808.8 L1425.5 806.4 L1425.9 808.8 L1426.1 797.3 L1426.7 796.8 L1426.7 794.4 L1427.1 796.8 L1427.9 795.8 L1429.0 789.6 L1430.2 815.6 L1430.6 821.0 L1430.6 816.1 L1431.0 821.0 L1431.0 826.3 L1432.2 806.5 L1432.8 805.5 L1432.8 799.9 L1433.2 805.5 L1434.0 803.4 L1434.5 798.0 L1434.5 792.2 L1434.9 798.0 L1435.0 792.7 L1435.7 797.3 L1435.7 793.3 L1436.1 797.3 L1437.1 806.5 L1437.9 821.0 L1438.2 806.9 L1438.2 803.1 L1438.7 806.9 L1438.6 792.7 L1439.3 799.6 L1439.3 796.2 L1439.8 799.6 L1440.1 806.5 L1440.4 792.4 L1440.4 789.0 L1440.8 792.4 L1440.8 778.2 L1446.6 778.2 L1447.2 782.8 L1447.5 773.2 L1447.5 769.0 L1447.9 773.2 L1447.8 763.7 L1448.5 761.4 L1448.5 759.2 L1449.0 761.4 L1449.3 759.1 L1450.0 758.4 L1450.0 753.8 L1450.5 758.4 L1450.8 757.6 L1451.4 766.0 L1451.4 763.6 L1451.8 766.0 L1452.1 774.4 L1453.6 766.7 L1455.4 770.5 L1455.7 761.8 L1455.7 758.6 L1456.1 761.8 L1455.9 753.0 L1457.9 752.2 L1458.2 750.3 L1458.2 745.2 L1458.6 750.3 L1458.5 748.4 L1459.2 754.5 L1459.2 751.9 L1459.7 754.5 L1460.0 760.6 L1460.4 767.9 L1460.4 762.2 L1460.8 767.9 L1460.8 775.1 L1461.5 758.3 L1462.3 756.4 L1462.3 753.7 L1462.7 756.4 L1463.1 754.5 L1463.8 746.9 L1464.2 743.0 L1464.2 738.2 L1464.6 743.0 L1464.6 739.2 L1467.3 739.2 L1467.7 744.2 L1467.7 741.9 L1468.1 744.2 L1468.0 749.2 L1470.7 749.2 L1471.9 753.0 L1472.2 744.2 L1472.2 741.8 L1472.6 744.2 L1472.5 735.4 L1473.8 749.9 L1475.6 736.2 L1475.9 744.6 L1475.9 739.2 L1476.3 744.6 L1476.2 753.0 L1477.0 741.5 L1477.0 736.1 L1477.4 741.5 L1477.7 730.1 L1478.4 727.8 L1478.4 724.4 L1478.8 727.8 L1479.2 725.5 L1479.2 719.8 L1479.6 725.5 L1479.9 723.2 L1480.5 726.7 L1480.5 724.0 L1480.9 726.7 L1481.1 730.1 L1481.2 743.9 L1481.2 740.8 L1481.7 743.9 L1481.4 757.6 L1486.7 757.6 L1488.3 756.8 L1489.0 763.3 L1489.0 760.6 L1489.5 763.3 L1489.8 769.8 L1490.5 772.8 L1490.5 770.0 L1491.0 772.8 L1491.3 775.9 L1491.8 781.5 L1491.8 778.2 L1492.2 781.5 L1492.9 792.7 L1493.7 788.9 L1493.7 784.8 L1494.1 788.9 L1494.4 785.1 L1494.8 779.0 L1494.8 775.5 L1495.2 779.0 L1495.1 772.8 L1499.0 772.8 L1499.8 777.4 L1499.8 774.3 L1500.2 777.4 L1500.5 782.0 L1501.2 769.8 L1501.2 764.8 L1501.7 769.8 L1502.0 757.6 L1502.8 767.5 L1502.8 764.7 L1503.2 767.5 L1503.6 777.4 L1504.3 782.0 L1504.3 776.3 L1504.7 782.0 L1505.1 786.6 L1505.1 781.3 L1505.5 786.6 L1505.8 791.2 L1506.3 787.1 L1506.3 783.1 L1506.7 787.1 L1507.4 778.9 L1508.2 790.4 L1508.2 786.3 L1508.6 790.4 L1508.9 801.9 L1510.4 778.9 L1511.9 776.9 L1511.9 771.6 L1512.3 776.9 L1512.7 775.9 L1515.0 788.1 L1515.8 780.9 L1515.8 777.4 L1516.2 780.9 L1516.5 773.6 L1517.3 781.6 L1517.3 779.0 L1517.7 781.6 L1518.1 789.6 L1518.9 791.7 L1518.9 786.7 L1519.3 791.7 L1519.6 793.7 L1519.6 791.0 L1520.0 793.7 L1520.4 795.8 L1521.2 792.3 L1521.2 787.0 L1521.6 792.3 L1523.4 782.0 L1524.2 778.4 L1524.2 775.4 L1524.6 778.4 L1524.9 774.9 L1524.9 771.0 L1525.3 774.9 L1525.7 771.3 L1526.1 769.0 L1526.1 765.2 L1526.5 769.0 L1526.5 766.7 L1526.8 776.7 L1526.8 770.8 L1527.2 776.7 L1527.2 786.6 L1528.8 791.2 L1529.5 803.4 L1529.5 800.3 L1530.0 803.4 L1530.3 815.6 L1531.8 819.7 L1531.8 816.2 L1532.2 819.7 L1532.6 821.7 L1533.3 813.3 L1533.3 809.7 L1533.8 813.3 L1534.1 804.9 L1534.8 799.5 L1534.8 795.5 L1535.2 799.5 L1535.6 794.2 L1536.1 799.8 L1536.1 795.7 L1536.5 799.8 L1536.7 805.4 L1536.7 802.3 L1537.1 805.4 L1537.2 811.0 L1538.0 804.9 L1538.0 801.2 L1538.4 804.9 L1538.7 798.8 L1538.7 796.6 L1539.1 798.8 L1539.5 792.7 L1540.2 787.4 L1540.2 784.3 L1540.7 787.4 L1541.0 782.0 L1541.8 786.6 L1541.8 782.4 L1542.2 786.6 L1542.5 791.2 L1544.0 774.4 L1547.9 773.6 L1548.3 778.2 L1549.8 767.5 L1551.1 773.1 L1551.1 769.7 L1551.5 773.1 L1551.7 775.9 L1553.2 770.5 L1554.0 778.5 L1554.0 773.6 L1554.4 778.5 L1554.7 786.6 L1556.2 784.1 L1556.2 778.7 L1556.6 784.1 L1557.0 782.8 L1557.6 807.5 L1564.0 807.5 L1565.3 829.4 L1566.6 810.0 L1567.9 821.6 L1567.9 817.5 L1568.3 821.6 L1568.5 827.4 L1568.5 822.0 L1569.0 827.4 L1569.2 833.2 L1571.0 811.3 L1571.7 814.7 L1571.7 809.2 L1572.1 814.7 L1573.1 821.6 L1577.7 821.6 L1578.7 837.1 L1579.5 844.2 L1579.5 842.0 L1579.9 844.2 L1580.3 851.3 L1580.9 844.4 L1580.9 840.9 L1581.3 844.4 L1581.5 837.6 L1581.5 832.2 L1581.9 837.6 L1582.1 830.7 L1585.4 830.7 L1585.7 794.0 L1585.7 789.4 L1586.1 794.0 L1586.0 757.2 L1588.0 732.7 L1592.9 732.7 L1593.6 738.8 L1593.6 736.7 L1594.0 738.8 L1595.8 757.2 L1596.4 763.2 L1596.4 759.0 L1596.8 763.2 L1597.6 775.2 L1598.2 764.9 L1598.2 759.9 L1598.6 764.9 L1598.8 754.6 L1599.5 754.0 L1599.5 751.6 L1599.9 754.0 L1600.1 753.3 L1600.1 748.4 L1600.5 753.3 L1600.8 752.6 L1600.8 747.7 L1601.2 752.6 L1601.4 752.0 L1602.8 774.3 L1602.8 770.7 L1603.2 774.3 L1603.5 785.5 L1604.1 791.5 L1604.1 786.8 L1604.5 791.5 L1605.3 803.6 L1607.4 780.4 L1608.0 783.8 L1608.0 781.2 L1608.4 783.8 L1608.6 787.3 L1608.6 782.3 L1609.0 787.3 L1609.2 790.7 L1609.9 783.0 L1609.9 778.7 L1610.3 783.0 L1610.5 775.2 L1610.5 772.9 L1610.9 775.2 L1611.2 767.5 L1611.8 772.6 L1611.8 767.9 L1612.2 772.6 L1613.8 788.1 L1614.4 783.4 L1614.4 779.3 L1614.8 783.4 L1615.0 778.6 L1615.0 774.7 L1615.4 778.6 L1615.6 773.9 L1616.2 780.7 L1616.2 775.1 L1616.7 780.7 L1616.9 787.5 L1616.9 781.5 L1617.3 787.5 L1618.2 801.0 L1618.8 805.3 L1618.8 801.4 L1619.2 805.3 L1620.0 813.9 L1621.5 847.4 L1622.1 840.5 L1622.1 837.4 L1622.5 840.5 L1622.8 833.7 L1622.8 827.9 L1623.2 833.7 L1623.4 826.8 L1624.0 828.1 L1624.0 823.7 L1624.4 828.1 L1624.7 829.4 L1624.7 825.3 L1625.1 829.4 L1625.9 832.0 L1626.6 822.3 L1626.6 817.0 L1627.0 822.3 L1627.2 812.6 L1627.2 807.1 L1627.6 812.6 L1628.5 793.3 L1629.1 786.4 L1629.1 780.8 L1629.5 786.4 L1629.7 779.5 L1629.7 777.3 L1630.1 779.5 L1630.3 772.6 L1631.0 779.5 L1631.0 775.5 L1631.4 779.5 L1631.7 786.4 L1631.7 783.1 L1632.1 786.4 L1632.4 793.3 L1633.1 797.1 L1633.1 793.7 L1633.5 797.1 L1633.7 801.0 L1633.7 795.6 L1634.1 801.0 L1634.3 804.9 L1634.3 799.8 L1634.8 804.9 L1635.0 808.7 L1636.3 786.4 L1636.3 780.7 L1636.7 786.4 L1637.0 775.2 L1638.1 753.3 L1639.3 752.6 L1639.3 749.1 L1639.8 752.6 L1640.0 752.3 L1640.0 746.3 L1640.4 752.3 L1640.6 752.0 L1641.2 759.8 L1641.2 756.2 L1641.6 759.8 L1641.7 767.5 L1642.5 760.6 L1642.5 757.4 L1642.9 760.6 L1643.2 753.7 L1643.2 751.2 L1643.6 753.7 L1644.0 746.8 L1645.3 739.1 L1645.3 733.3 L1645.7 739.1 L1646.0 735.2 L1646.0 732.1 L1646.4 735.2 L1646.6 731.4 L1646.6 728.5 L1647.0 731.4 L1647.3 727.5 L1647.9 729.6 L1647.9 723.8 L1648.3 729.6 L1649.1 733.9 L1651.7 757.2 L1653.0 763.0 L1653.0 758.1 L1653.4 763.0 L1653.7 765.9 L1653.7 760.9 L1654.1 765.9 L1654.3 768.8 L1655.0 762.3 L1655.0 757.3 L1655.4 762.3 L1656.4 749.4 L1657.0 743.8 L1657.0 741.5 L1657.4 743.8 L1658.2 732.7 L1658.8 732.4 L1658.8 728.4 L1659.2 732.4 L1659.5 732.0 L1659.5 728.8 L1659.9 732.0 L1660.8 731.4 L1662.0 715.9 L1662.7 717.8 L1662.7 713.2 L1663.1 717.8 L1663.3 719.8 L1663.3 715.5 L1663.7 719.8 L1663.9 721.7 L1663.9 718.9 L1664.3 721.7 L1664.6 723.6 L1665.2 717.6 L1665.2 714.7 L1665.6 717.6 L1666.4 705.6 L1667.1 705.3 L1667.1 702.4 L1667.5 705.3 L1669.1 704.6 L1669.1 701.9 L1669.5 704.6 L1669.8 704.3 L1670.5 701.4 L1670.5 698.9 L1670.9 701.4 L1671.1 698.5 L1671.1 696.0 L1671.5 698.5 L1671.8 695.6 L1671.8 692.5 L1672.2 695.6 L1672.4 692.7 L1673.0 701.3 L1673.0 695.7 L1673.4 701.3 L1674.2 718.5 L1674.9 712.5 L1674.9 708.8 L1675.3 712.5 L1675.5 706.4 L1675.5 702.9 L1675.9 706.4 L1676.2 700.4 L1676.8 689.5 L1676.8 687.1 L1677.2 689.5 L1677.5 678.5 L1678.2 689.5 L1678.2 683.6 L1678.6 689.5 L1678.8 700.4 L1679.4 707.3 L1679.4 703.2 L1679.8 707.3 L1680.6 721.0 L1682.0 707.3 L1682.0 704.1 L1682.4 707.3 L1682.7 700.4 L1683.4 699.5 L1683.4 695.9 L1683.8 699.5 L1684.0 698.7 L1684.0 692.8 L1684.4 698.7 L1684.7 697.8 L1686.0 708.1 L1687.2 709.8 L1687.2 707.6 L1687.6 709.8 L1687.8 710.7 L1689.6 733.9 L1690.3 727.9 L1690.3 723.5 L1690.7 727.9 L1691.0 721.9 L1691.0 718.3 L1691.4 721.9 L1691.7 715.9 L1694.3 723.6 L1695.5 742.5 L1695.5 740.0 L1695.9 742.5 L1696.1 752.0 L1696.8 746.0 L1696.8 741.8 L1697.2 746.0 L1698.2 733.9 L1700.7 721.0 L1702.0 708.1 L1702.0 703.9 L1702.4 708.1 L1702.7 701.7 L1702.7 696.6 L1703.1 701.7 L1703.3 695.3 L1704.0 694.6 L1704.0 689.0 L1704.4 694.6 L1705.2 693.4 L1705.2 690.8 L1705.7 693.4 L1705.9 692.7 L1706.6 697.9 L1706.6 693.3 L1707.0 697.9 L1707.2 703.0 L1708.5 694.4 L1708.5 692.0 L1708.9 694.4 L1709.2 690.1 L1710.0 686.2 L1710.0 681.9 L1710.4 686.2 L1710.8 682.4 L1711.5 687.5 L1711.5 684.6 L1712.0 687.5 L1712.3 692.7 L1713.6 694.0 L1713.6 690.7 L1714.0 694.0 L1714.2 694.6 L1714.2 688.8 L1714.7 694.6 L1714.9 695.3 L1717.0 718.5 L1717.7 714.0 L1717.7 711.0 L1718.1 714.0 L1718.3 709.5 L1718.3 703.6 L1718.7 709.5 L1719.6 700.4 L1720.2 702.1 L1720.2 699.9 L1720.6 702.1 L1720.8 703.9 L1720.8 699.1 L1721.2 703.9 L1721.4 705.6 L1722.0 709.0 L1722.0 705.9 L1722.4 709.0 L1723.2 715.9 L1724.5 703.8 L1724.5 701.6 L1724.9 703.8 L1725.2 697.8 L1725.9 691.4 L1725.9 687.6 L1726.3 691.4 L1727.3 678.5 L1730.4 678.5 L1731.1 675.0 L1731.1 669.7 L1731.5 675.0 L1732.3 667.8 L1732.3 664.9 L1732.8 667.8 L1733.0 664.3 L1734.3 662.3 L1734.3 657.1 L1734.7 662.3 L1734.9 661.4 L1734.9 658.4 L1735.3 661.4 L1735.6 660.4 L1737.1 653.3 L1737.1 647.5 L1737.5 653.3 L1737.8 649.8 L1737.8 646.9 L1738.2 649.8 L1738.6 646.2 L1739.1 640.2 L1739.1 636.5 L1739.5 640.2 L1740.2 628.2 L1741.4 643.7 L1741.4 640.0 L1741.8 643.7 L1742.0 651.4 L1745.4 651.4 L1745.7 655.9 L1745.7 650.0 L1746.1 655.9 L1745.9 660.4 L1748.4 660.4 L1749.1 652.0 L1749.1 649.7 L1749.5 652.0 L1749.7 643.7 L1750.3 643.1 L1750.3 639.4 L1750.8 643.1 L1752.3 641.1 L1754.9 630.8 L1755.6 627.6 L1755.6 624.8 L1756.0 627.6 L1757.5 617.9 L1761.3 617.9 L1761.7 610.5 L1761.7 605.8 L1762.1 610.5 L1762.0 603.0 L1762.7 609.7 L1762.7 606.1 L1763.1 609.7 L1763.3 616.4 L1763.3 613.6 L1763.7 616.4 L1764.0 623.1 L1764.7 613.0 L1764.7 609.9 L1765.1 613.0 L1765.3 603.0 L1766.0 602.6 L1766.0 596.7 L1766.4 602.6 L1766.7 602.1 L1766.7 596.3 L1767.1 602.1 L1767.4 601.7 L1768.1 605.7 L1768.1 602.2 L1768.5 605.7 L1768.7 609.7 L1770.7 624.4 L1771.3 614.0 L1771.3 611.8 L1771.8 614.0 L1772.0 603.7 L1772.7 607.5 L1772.7 603.9 L1773.1 607.5 L1774.0 615.1 L1774.7 620.5 L1774.7 616.9 L1775.1 620.5 L1775.4 625.8 L1776.7 612.4 L1777.4 616.4 L1777.4 612.7 L1777.8 616.4 L1778.7 624.4 L1779.8 603.0 L1782.1 603.0 L1782.5 594.4 L1782.5 592.1 L1783.0 594.4 L1783.0 585.7 L1792.8 585.7 L1793.1 582.7 L1793.1 577.0 L1793.5 582.7 L1793.4 579.6 L1794.0 583.3 L1794.0 578.3 L1794.4 583.3 L1794.5 587.0 L1795.8 612.4 L1796.3 607.0 L1796.3 603.9 L1796.7 607.0 L1796.8 601.7 L1798.1 608.4 L1798.8 581.0 L1799.5 582.1 L1799.5 577.2 L1799.9 582.1 L1800.1 583.2 L1800.1 580.0 L1800.5 583.2 L1800.8 584.3 L1801.4 591.6 L1801.4 586.6 L1801.8 591.6 L1802.1 599.0 L1803.5 599.0 L1804.8 615.1 L1806.1 629.8 L1807.5 621.8 L1808.2 627.6 L1808.2 624.6 L1808.6 627.6 L1808.8 633.4 L1808.8 627.6 L1809.2 633.4 L1809.5 639.2 L1810.5 631.1 L1811.0 625.8 L1811.0 622.7 L1811.4 625.8 L1811.5 620.4 L1816.2 620.4 L1817.0 613.8 L1817.0 609.7 L1817.4 613.8 L1817.8 607.1 L1818.6 628.5 L1822.9 628.5 L1823.6 623.1 L1823.6 617.9 L1824.0 623.1 L1824.2 617.8 L1825.5 629.8 L1826.9 641.8 L1827.9 624.4 L1829.4 623.5 L1829.4 620.2 L1829.8 623.5 L1830.2 623.1 L1830.6 619.8 L1830.6 614.6 L1831.0 619.8 L1830.9 616.4 L1831.6 623.8 L1831.6 620.9 L1832.0 623.8 L1832.2 631.1 L1833.5 633.8 L1833.5 631.4 L1833.9 633.8 L1834.2 635.1 L1834.9 628.5 L1834.9 624.2 L1835.3 628.5 L1835.6 621.8 L1835.9 616.8 L1835.9 610.8 L1836.3 616.8 L1836.2 611.7 L1838.2 611.1 L1839.6 619.1 L1840.0 595.0 L1843.6 594.4 L1844.3 596.8 L1844.3 594.4 L1844.7 596.8 L1844.9 599.3 L1844.9 595.2 L1845.3 599.3 L1845.6 601.7 L1846.9 604.4 L1847.2 594.3 L1847.2 591.3 L1847.7 594.3 L1847.6 584.3 L1855.2 584.3 L1855.6 589.0 L1855.6 584.5 L1856.0 589.0 L1856.0 593.7 L1856.5 575.0 L1858.3 566.9 L1861.0 566.7 L1862.3 571.0 L1862.7 560.3 L1862.7 554.9 L1863.1 560.3 L1863.0 549.6 L1863.7 546.2 L1863.7 541.9 L1864.1 546.2 L1864.3 542.9 L1864.5 540.5 L1864.5 535.6 L1864.9 540.5 L1864.7 538.2 L1865.5 541.9 L1865.5 538.8 L1865.9 541.9 L1866.3 545.5 L1866.7 556.9 L1866.7 554.2 L1867.1 556.9 L1867.0 568.3 L1868.3 558.9 L1869.0 564.3 L1869.0 560.9 L1869.4 564.3 L1869.6 569.6 L1869.6 563.7 L1870.0 569.6 L1870.3 575.0 L1871.0 569.3 L1871.0 566.3 L1871.4 569.3 L1871.7 563.6 L1873.7 575.0 L1875.0 571.4 L1875.0 567.4 L1875.4 571.4 L1875.7 569.6 L1877.7 577.6 L1879.0 588.3 L1879.7 591.0 L1879.7 587.8 L1880.1 591.0 L1880.3 593.7 L1880.3 590.9 L1880.7 593.7 L1881.0 596.4 L1882.3 604.4 L1882.3 598.7 L1882.7 604.4 L1883.0 608.4 L1883.3 597.7 L1883.3 592.2 L1883.8 597.7 L1883.7 587.0 L1884.3 600.4 L1884.3 597.2 L1884.8 600.4 L1885.0 613.7 L1886.4 593.7 L1887.7 592.8 L1887.7 588.4 L1888.1 592.8 L1888.4 592.4 L1889.0 584.3 L1889.7 589.6 L1889.7 586.1 L1890.1 589.6 L1890.4 595.0 L1891.1 603.0 L1891.1 600.2 L1891.5 603.0 L1891.7 611.1 L1892.4 613.8 L1892.4 609.3 L1892.8 613.8 L1893.1 616.4 L1893.7 644.5 L1894.4 644.8 L1894.4 642.7 L1894.8 644.8 L1895.1 645.1 L1895.1 640.4 L1895.5 645.1 L1895.7 645.5 L1895.7 642.2 L1896.1 645.5 L1896.4 645.8 L1897.0 648.1 L1897.0 642.9 L1897.4 648.1 L1897.5 650.5 L1898.3 643.5 L1898.3 641.2 L1898.7 643.5 L1899.1 636.5 L1899.8 639.1 L1899.8 635.5 L1900.2 639.1 L1900.4 641.8 L1901.0 635.5 L1901.0 630.9 L1901.4 635.5 L1901.5 629.1 L1902.3 632.8 L1902.3 630.1 L1902.7 632.8 L1903.1 636.5 L1904.4 630.2 L1904.4 627.0 L1904.8 630.2 L1905.1 627.1 L1905.8 629.8 L1905.8 624.0 L1906.2 629.8 L1906.4 632.5 L1907.0 628.7 L1907.0 624.4 L1907.4 628.7 L1907.6 624.9 L1907.6 621.2 L1908.0 624.9 L1908.2 621.1 L1909.1 647.2 L1910.0 653.9 L1910.5 643.5 L1910.5 640.6 L1911.0 643.5 L1911.1 633.1 L1916.5 633.1 L1917.5 641.8 L1918.3 631.1 L1918.3 629.0 L1918.7 631.1 L1919.1 620.4 L1920.5 615.1 L1921.2 619.1 L1921.2 613.8 L1921.6 619.1 L1921.8 623.1 L1922.2 618.4 L1922.2 612.9 L1922.6 618.4 L1922.5 613.7 L1923.1 619.7 L1923.1 617.0 L1923.5 619.7 L1923.6 625.8 L1923.6 621.5 L1924.0 625.8 L1924.2 631.8 L1925.8 611.7 L1927.1 610.4 L1927.1 605.8 L1927.5 610.4 L1927.8 609.7 L1928.5 613.8 L1928.5 609.7 L1928.9 613.8 L1929.2 617.8 L1929.8 618.7 L1929.8 615.5 L1930.2 618.7 L1930.3 619.5 L1930.3 613.8 L1930.7 619.5 L1930.9 620.4 L1931.3 608.4 L1931.3 604.4 L1931.8 608.4 L1931.8 596.4 L1933.2 604.4 L1934.5 620.4 L1935.0 615.0 L1935.0 612.5 L1935.4 615.0 L1935.4 609.7 L1936.8 621.1 L1937.6 601.7 L1938.2 610.8 L1938.2 608.4 L1938.7 610.8 L1938.9 619.8 L1942.5 619.8 L1943.9 625.8 L1944.6 627.1 L1944.6 621.5 L1945.0 627.1 L1945.2 628.5 L1945.9 592.4 L1947.2 584.3 L1948.0 593.0 L1948.0 587.8 L1948.4 593.0 L1948.8 601.7 L1949.3 595.0 L1949.3 591.3 L1949.8 595.0 L1949.9 588.3 L1951.0 608.4 L1952.6 599.0 L1953.2 593.4 L1953.2 590.4 L1953.7 593.4 L1953.9 587.7 L1954.2 600.7 L1954.2 596.6 L1954.7 600.7 L1954.6 613.7 L1955.2 619.5 L1955.2 616.9 L1955.6 619.5 L1955.7 625.3 L1955.7 620.4 L1956.1 625.3 L1956.3 631.1 L1956.8 610.8 L1961.3 610.8 L1961.5 615.3 L1961.5 611.0 L1961.9 615.3 L1961.7 619.8 L1966.6 619.8 L1967.0 591.0 L1969.9 591.0 L1970.5 600.4 L1970.5 595.0 L1970.9 600.4 L1971.0 609.7 L1971.6 601.7 L1971.6 597.3 L1972.0 601.7 L1972.3 593.7 L1972.3 589.2 L1972.7 593.7 L1972.9 585.7 L1973.3 595.0 L1973.3 591.3 L1973.7 595.0 L1973.7 604.4 L1974.3 609.8 L1974.3 606.0 L1974.8 609.8 L1975.0 615.1 L1975.6 604.4" stroke="#2f8a2f" stroke-width="1.3"/><path d="M1149.9 906.8 L1150.3 900.0 L1150.3 904.4 L1150.7 900.0 L1150.7 893.1 L1151.5 896.9 L1151.5 902.2 L1151.9 896.9 L1152.2 900.7 L1152.2 904.2 L1152.7 900.7 L1153.0 904.5 L1153.0 910.5 L1153.4 904.5 L1153.8 908.3 L1154.2 898.8 L1154.2 902.0 L1154.6 898.8 L1154.5 889.2 L1154.9 884.2 L1154.9 887.2 L1155.3 884.2 L1155.3 879.3 L1156.1 887.5 L1156.1 891.9 L1156.5 887.5 L1156.8 895.6 L1156.8 900.1 L1157.2 895.6 L1157.6 903.8 L1158.4 898.2 L1158.4 900.8 L1158.8 898.2 L1159.1 892.6 L1159.1 895.4 L1159.5 892.6 L1159.9 887.0 L1160.7 883.1 L1160.7 889.1 L1161.1 883.1 L1161.4 879.3 L1162.2 887.7 L1162.2 890.4 L1162.6 887.7 L1162.9 896.1 L1163.7 887.4 L1163.7 891.6 L1164.1 887.4 L1165.2 870.1 L1166.0 871.1 L1166.0 877.5 L1166.4 871.1 L1167.5 873.2 L1168.3 865.2 L1168.3 871.3 L1168.7 865.2 L1169.0 857.2 L1169.0 864.1 L1169.5 857.2 L1169.8 849.1 L1169.8 855.9 L1170.2 849.1 L1170.6 841.1 L1172.1 864.8 L1175.9 865.6 L1176.3 858.0 L1176.3 864.0 L1176.7 858.0 L1176.7 850.3 L1177.9 876.3 L1178.5 869.2 L1178.5 873.2 L1178.9 869.2 L1179.1 862.0 L1179.1 865.2 L1179.5 862.0 L1179.7 854.9 L1182.8 854.9 L1183.5 862.5 L1184.3 850.3 L1184.3 856.5 L1184.7 850.3 L1185.1 838.1 L1185.8 831.2 L1185.8 835.9 L1186.2 831.2 L1186.6 824.3 L1188.1 820.2 L1188.1 823.9 L1188.5 820.2 L1188.9 818.2 L1189.3 822.8 L1189.3 826.7 L1189.7 822.8 L1189.7 827.4 L1192.7 827.4 L1193.2 825.8 L1193.2 829.1 L1193.7 825.8 L1193.8 824.3 L1194.4 832.7 L1194.4 839.4 L1194.8 832.7 L1195.0 841.1 L1195.4 856.4 L1195.4 862.9 L1195.8 856.4 L1195.8 871.7 L1196.2 861.0 L1196.2 867.0 L1196.6 861.0 L1196.5 850.3 L1199.6 850.3 L1200.3 838.0 L1200.3 842.9 L1200.8 838.0 L1201.1 825.8 L1201.5 826.6 L1201.5 830.7 L1201.9 826.6 L1201.9 827.4 L1203.4 857.9 L1203.8 854.1 L1203.8 859.2 L1204.2 854.1 L1204.2 850.3 L1208.8 850.3 L1209.5 847.2 L1210.3 855.4 L1210.3 862.3 L1210.7 855.4 L1211.0 863.5 L1211.0 867.8 L1211.4 863.5 L1211.8 871.7 L1212.5 870.9 L1212.5 874.6 L1213.0 870.9 L1213.3 870.1 L1214.4 893.1 L1215.0 882.4 L1215.0 886.5 L1215.4 882.4 L1215.6 871.7 L1218.7 871.7 L1219.1 868.7 L1219.1 873.1 L1219.5 868.7 L1219.4 865.6 L1220.2 871.7 L1220.2 877.5 L1220.6 871.7 L1221.0 877.8 L1221.8 883.9 L1221.8 890.1 L1222.2 883.9 L1222.5 890.0 L1223.1 878.5 L1223.1 883.9 L1223.5 878.5 L1223.7 867.1 L1230.1 867.1 L1230.9 879.3 L1231.1 868.2 L1231.1 873.7 L1231.5 868.2 L1231.2 857.2 L1234.0 857.2 L1234.8 862.9 L1234.8 865.4 L1235.2 862.9 L1235.5 868.6 L1236.3 863.0 L1236.3 866.1 L1236.7 863.0 L1237.0 857.4 L1237.0 861.8 L1237.4 857.4 L1237.8 851.8 L1238.5 864.8 L1238.5 871.3 L1239.0 864.8 L1239.3 877.8 L1240.1 863.3 L1240.1 866.8 L1240.5 863.3 L1240.8 848.7 L1240.8 851.3 L1241.2 848.7 L1241.6 834.2 L1242.2 849.9 L1242.2 854.0 L1242.6 849.9 L1242.7 865.6 L1243.4 873.5 L1243.4 877.5 L1243.8 873.5 L1244.0 881.3 L1244.0 886.4 L1244.4 881.3 L1244.7 889.2 L1245.2 880.5 L1245.2 883.8 L1245.6 880.5 L1245.7 871.7 L1246.3 877.0 L1246.3 881.7 L1246.8 877.0 L1247.0 882.4 L1247.7 886.7 L1247.7 893.4 L1248.1 886.7 L1248.5 891.1 L1248.5 894.2 L1248.9 891.1 L1249.2 895.4 L1249.6 880.5 L1249.6 885.9 L1250.0 880.5 L1250.0 865.6 L1251.5 848.8 L1251.5 853.1 L1251.9 848.8 L1252.3 840.4 L1252.8 847.6 L1252.8 850.2 L1253.2 847.6 L1253.4 854.9 L1254.1 846.3 L1254.1 851.3 L1254.5 846.3 L1254.8 837.7 L1254.8 843.1 L1255.2 837.7 L1255.4 829.1 L1255.4 835.8 L1255.8 829.1 L1256.1 820.5 L1256.8 824.7 L1256.8 828.3 L1257.2 824.7 L1257.6 828.9 L1258.7 818.2 L1258.7 823.0 L1259.1 818.2 L1259.2 812.8 L1261.5 812.8 L1262.2 819.3 L1262.2 822.8 L1262.7 819.3 L1263.0 825.8 L1263.8 817.0 L1263.8 823.0 L1264.2 817.0 L1264.5 808.3 L1265.3 819.3 L1265.3 824.3 L1265.7 819.3 L1266.1 830.4 L1267.3 838.1 L1267.7 825.5 L1267.7 828.8 L1268.1 825.5 L1268.0 812.8 L1273.7 812.8 L1274.1 821.6 L1274.1 826.4 L1274.5 821.6 L1274.5 830.4 L1275.2 840.3 L1275.2 846.5 L1275.7 840.3 L1276.0 850.3 L1276.5 843.4 L1276.5 847.3 L1277.0 843.4 L1277.1 836.5 L1277.7 843.1 L1277.7 845.8 L1278.1 843.1 L1279.0 856.4 L1279.8 865.5 L1279.8 871.3 L1280.2 865.5 L1280.6 874.7 L1281.4 882.3 L1281.4 888.6 L1281.8 882.3 L1282.1 890.0 L1282.1 894.5 L1282.5 890.0 L1282.9 897.6 L1283.7 906.0 L1283.7 910.6 L1284.1 906.0 L1284.4 914.5 L1285.2 906.9 L1285.2 909.8 L1285.6 906.9 L1285.9 899.2 L1286.7 903.8 L1286.7 906.4 L1287.1 903.8 L1287.4 908.3 L1292.0 908.3 L1292.2 903.0 L1292.2 908.8 L1292.6 903.0 L1292.3 897.6 L1292.5 904.5 L1292.5 910.8 L1293.0 904.5 L1292.8 911.4 L1293.0 910.2 L1293.0 913.9 L1293.4 910.2 L1293.2 909.1 L1298.1 909.1 L1298.6 903.2 L1298.6 907.7 L1299.0 903.2 L1299.2 897.4 L1299.2 902.2 L1299.6 897.4 L1299.7 891.5 L1300.5 902.2 L1300.5 907.6 L1300.9 902.2 L1301.2 912.9 L1302.7 889.2 L1305.8 888.5 L1306.2 879.3 L1306.2 885.8 L1306.6 879.3 L1306.5 870.1 L1307.2 869.4 L1307.2 873.0 L1307.6 869.4 L1307.8 868.6 L1307.8 874.5 L1308.2 868.6 L1308.5 867.9 L1309.3 892.3 L1310.0 896.9 L1310.0 900.8 L1310.4 896.9 L1311.2 906.0 L1311.2 909.6 L1311.7 906.0 L1311.9 910.6 L1315.7 910.6 L1316.2 919.0 L1322.6 919.0 L1322.8 910.2 L1322.8 915.9 L1323.2 910.2 L1322.9 901.5 L1323.1 911.8 L1323.1 918.7 L1323.5 911.8 L1323.3 922.1 L1323.5 920.5 L1323.5 926.8 L1324.0 920.5 L1323.8 919.0 L1326.7 919.0 L1327.0 921.7 L1327.0 928.1 L1327.4 921.7 L1327.3 924.4 L1328.0 913.3 L1328.0 919.0 L1328.4 913.3 L1328.7 902.2 L1329.5 897.2 L1329.5 901.1 L1329.9 897.2 L1330.2 892.3 L1330.2 897.6 L1330.6 892.3 L1331.0 887.4 L1331.0 893.9 L1331.4 887.4 L1331.7 882.4 L1332.5 880.9 L1332.5 883.4 L1332.9 880.9 L1333.2 879.3 L1333.2 886.0 L1333.6 879.3 L1334.0 877.8 L1334.8 882.4 L1334.8 885.5 L1335.2 882.4 L1335.6 887.0 L1336.3 901.5 L1336.3 904.1 L1336.8 901.5 L1337.1 916.0 L1337.5 906.8 L1337.5 912.1 L1337.9 906.8 L1337.9 897.6 L1340.0 897.6 L1340.7 896.2 L1340.7 902.1 L1341.1 896.2 L1341.3 894.9 L1341.3 900.0 L1341.8 894.9 L1342.0 893.6 L1342.0 899.7 L1342.4 893.6 L1342.7 892.2 L1344.7 909.3 L1344.7 915.7 L1345.1 909.3 L1345.3 915.0 L1346.7 892.2 L1348.0 891.3 L1348.0 894.7 L1348.4 891.3 L1348.7 890.9 L1349.3 884.9 L1349.3 887.5 L1349.8 884.9 L1350.0 878.9 L1351.4 894.9 L1352.7 872.9 L1353.4 872.4 L1353.4 878.6 L1353.8 872.4 L1354.1 871.9 L1354.1 875.7 L1354.5 871.9 L1354.7 871.4 L1354.7 874.3 L1355.1 871.4 L1355.4 870.9 L1356.1 878.2 L1356.1 881.6 L1356.5 878.2 L1356.7 885.6 L1357.3 892.6 L1357.3 897.0 L1357.8 892.6 L1358.0 899.6 L1360.1 898.9 L1360.8 903.6 L1360.8 907.2 L1361.2 903.6 L1361.4 908.3 L1362.1 897.0 L1362.1 902.7 L1362.5 897.0 L1362.7 885.6 L1363.4 882.2 L1363.4 886.2 L1363.8 882.2 L1364.1 878.9 L1365.4 886.9 L1365.4 893.2 L1365.8 886.9 L1366.1 890.9 L1366.8 885.1 L1366.8 887.7 L1367.2 885.1 L1367.4 879.3 L1367.4 883.7 L1367.8 879.3 L1368.1 873.5 L1368.8 869.7 L1368.8 873.8 L1369.2 869.7 L1369.4 866.0 L1369.4 870.9 L1369.8 866.0 L1370.1 862.2 L1374.1 861.5 L1374.5 865.9 L1374.5 872.2 L1375.0 865.9 L1375.0 870.2 L1375.2 861.9 L1375.2 868.0 L1375.6 861.9 L1375.4 853.5 L1377.4 852.8 L1378.1 843.1 L1378.1 845.6 L1378.5 843.1 L1378.8 833.4 L1379.4 823.4 L1379.4 829.3 L1379.8 823.4 L1380.1 813.4 L1380.8 806.7 L1381.1 811.4 L1381.1 816.0 L1381.5 811.4 L1381.4 816.0 L1384.1 816.0 L1384.7 821.4 L1384.7 827.4 L1385.1 821.4 L1385.2 826.7 L1385.7 817.0 L1385.7 821.8 L1386.1 817.0 L1386.1 807.4 L1390.1 807.4 L1390.3 792.3 L1390.3 798.5 L1390.7 792.3 L1390.5 777.2 L1395.1 777.2 L1395.3 769.2 L1395.3 775.9 L1395.7 769.2 L1395.5 761.1 L1396.0 771.8 L1396.0 775.2 L1396.5 771.8 L1396.6 782.5 L1397.3 778.7 L1397.3 783.4 L1397.7 778.7 L1397.9 774.8 L1397.9 780.2 L1398.3 774.8 L1398.6 771.0 L1399.2 782.9 L1399.2 788.9 L1399.6 782.9 L1399.7 794.7 L1400.5 805.4 L1400.5 811.4 L1400.9 805.4 L1401.2 816.1 L1401.4 824.5 L1401.4 828.6 L1401.8 824.5 L1401.6 832.9 L1402.2 823.3 L1402.2 827.6 L1402.6 823.3 L1402.7 813.8 L1404.2 819.4 L1404.2 825.9 L1404.6 819.4 L1405.0 822.2 L1405.6 828.8 L1405.6 832.2 L1406.0 828.8 L1406.2 835.5 L1406.2 842.0 L1406.6 835.5 L1406.8 842.1 L1407.3 829.9 L1407.3 834.0 L1407.7 829.9 L1407.8 817.6 L1408.8 831.4 L1409.3 838.5 L1409.3 843.1 L1409.7 838.5 L1409.9 845.7 L1409.9 851.5 L1410.3 845.7 L1410.4 852.8 L1410.9 858.3 L1410.9 863.7 L1411.3 858.3 L1411.4 863.9 L1412.0 853.0 L1412.0 856.9 L1412.4 853.0 L1412.6 842.1 L1413.1 843.6 L1413.1 849.9 L1413.5 843.6 L1413.7 845.2 L1413.7 851.0 L1414.1 845.2 L1414.2 846.7 L1415.0 834.5 L1415.0 838.9 L1415.4 834.5 L1415.7 822.2 L1416.5 819.2 L1416.5 824.2 L1416.9 819.2 L1417.2 816.1 L1418.0 821.5 L1418.0 826.0 L1418.4 821.5 L1418.8 826.8 L1420.0 810.0 L1421.5 810.0 L1421.8 801.6 L1421.8 804.9 L1422.2 801.6 L1422.1 793.2 L1422.7 801.6 L1422.7 807.2 L1423.1 801.6 L1423.3 810.0 L1424.4 817.1 L1424.4 820.3 L1424.8 817.1 L1424.9 820.7 L1425.5 809.2 L1425.5 813.2 L1425.9 809.2 L1426.1 797.8 L1426.7 797.3 L1426.7 800.5 L1427.1 797.3 L1427.3 796.8 L1427.3 800.1 L1427.7 796.8 L1427.9 796.3 L1429.0 790.1 L1429.6 803.1 L1429.6 806.0 L1430.0 803.1 L1430.2 816.1 L1431.0 826.8 L1431.6 816.9 L1431.6 821.1 L1432.0 816.9 L1432.2 807.0 L1433.4 804.9 L1433.4 810.7 L1433.8 804.9 L1434.0 803.9 L1434.5 798.5 L1434.5 801.9 L1434.9 798.5 L1435.0 793.2 L1435.7 797.8 L1435.7 800.7 L1436.1 797.8 L1436.4 802.4 L1436.4 806.6 L1436.8 802.4 L1437.1 807.0 L1437.5 814.2 L1437.5 818.5 L1437.9 814.2 L1437.9 821.5 L1438.2 807.4 L1438.2 813.0 L1438.7 807.4 L1438.6 793.2 L1439.3 800.1 L1439.3 805.4 L1439.8 800.1 L1440.1 807.0 L1440.4 792.9 L1440.4 795.9 L1440.8 792.9 L1440.8 778.7 L1446.6 778.7 L1446.9 781.0 L1446.9 785.3 L1447.3 781.0 L1447.2 783.3 L1447.5 773.8 L1447.5 780.3 L1447.9 773.8 L1447.8 764.2 L1448.5 761.9 L1448.5 767.0 L1449.0 761.9 L1449.3 759.6 L1450.0 758.9 L1450.0 763.2 L1450.5 758.9 L1450.8 758.1 L1451.4 766.5 L1451.4 772.2 L1451.8 766.5 L1452.1 774.9 L1453.6 767.2 L1454.2 768.5 L1454.2 774.1 L1454.6 768.5 L1455.4 771.0 L1455.7 762.2 L1455.7 767.6 L1456.1 762.2 L1455.9 753.5 L1457.9 752.7 L1458.2 750.8 L1458.2 754.7 L1458.6 750.8 L1458.5 748.9 L1459.2 755.0 L1459.2 757.9 L1459.7 755.0 L1460.0 761.1 L1460.4 768.4 L1460.4 774.4 L1460.8 768.4 L1460.8 775.6 L1461.2 767.2 L1461.2 772.5 L1461.6 767.2 L1461.5 758.8 L1462.3 756.9 L1462.3 761.3 L1462.7 756.9 L1463.1 755.0 L1463.4 751.2 L1463.4 756.5 L1463.8 751.2 L1463.8 747.4 L1464.2 743.5 L1464.2 749.1 L1464.6 743.5 L1464.6 739.7 L1467.3 739.7 L1468.0 749.7 L1470.7 749.7 L1471.3 751.6 L1471.3 757.0 L1471.7 751.6 L1471.9 753.5 L1472.2 744.7 L1472.2 748.9 L1472.6 744.7 L1472.5 735.9 L1473.2 743.1 L1473.2 750.0 L1473.6 743.1 L1473.8 750.4 L1474.4 745.8 L1474.4 750.8 L1474.8 745.8 L1475.0 741.3 L1475.0 747.3 L1475.4 741.3 L1475.6 736.7 L1476.2 753.5 L1477.0 742.0 L1477.0 745.0 L1477.4 742.0 L1477.7 730.6 L1478.4 728.3 L1478.4 733.2 L1478.8 728.3 L1479.2 726.0 L1479.2 730.8 L1479.6 726.0 L1479.9 723.7 L1480.5 727.2 L1480.5 733.4 L1480.9 727.2 L1481.1 730.6 L1481.2 744.4 L1481.2 748.7 L1481.7 744.4 L1481.4 758.1 L1486.7 758.1 L1488.3 757.3 L1489.8 770.3 L1490.5 773.3 L1490.5 778.9 L1491.0 773.3 L1491.3 776.4 L1491.8 782.0 L1491.8 787.9 L1492.2 782.0 L1492.4 787.6 L1492.4 794.5 L1492.8 787.6 L1492.9 793.2 L1493.7 789.4 L1493.7 792.1 L1494.1 789.4 L1494.4 785.6 L1494.8 779.5 L1494.8 783.7 L1495.2 779.5 L1495.1 773.3 L1499.0 773.3 L1499.8 777.9 L1499.8 782.3 L1500.2 777.9 L1500.5 782.5 L1501.2 770.3 L1501.2 775.9 L1501.7 770.3 L1502.0 758.1 L1502.8 768.0 L1502.8 771.7 L1503.2 768.0 L1503.6 777.9 L1504.3 782.5 L1504.3 788.3 L1504.7 782.5 L1505.8 791.7 L1506.3 787.6 L1506.3 791.0 L1506.7 787.6 L1507.4 779.4 L1508.2 790.9 L1508.2 794.3 L1508.6 790.9 L1508.9 802.4 L1509.7 790.9 L1509.7 796.9 L1510.1 790.9 L1510.4 779.4 L1511.9 777.4 L1511.9 782.0 L1512.3 777.4 L1512.7 776.4 L1513.5 780.5 L1513.5 783.9 L1513.9 780.5 L1515.0 788.6 L1515.8 781.4 L1515.8 786.7 L1516.2 781.4 L1516.5 774.1 L1518.1 790.1 L1519.6 794.2 L1519.6 798.0 L1520.0 794.2 L1520.4 796.3 L1521.2 792.8 L1521.2 795.9 L1521.6 792.8 L1522.7 786.0 L1522.7 792.3 L1523.1 786.0 L1523.4 782.5 L1524.2 778.9 L1524.2 783.1 L1524.6 778.9 L1524.9 775.4 L1524.9 779.8 L1525.3 775.4 L1525.7 771.8 L1526.1 769.5 L1526.1 772.0 L1526.5 769.5 L1526.5 767.2 L1526.8 777.2 L1526.8 780.9 L1527.2 777.2 L1527.2 787.1 L1528.0 789.4 L1528.0 793.2 L1528.4 789.4 L1528.8 791.7 L1529.5 803.9 L1529.5 808.3 L1530.0 803.9 L1530.3 816.1 L1531.1 818.1 L1531.1 823.6 L1531.5 818.1 L1531.8 820.2 L1531.8 826.8 L1532.2 820.2 L1532.6 822.2 L1534.1 805.4 L1534.8 800.0 L1534.8 806.3 L1535.2 800.0 L1535.6 794.7 L1536.7 805.9 L1536.7 809.0 L1537.1 805.9 L1537.2 811.5 L1538.7 799.3 L1538.7 801.8 L1539.1 799.3 L1539.5 793.2 L1540.2 787.9 L1540.2 794.6 L1540.7 787.9 L1541.0 782.5 L1541.8 787.1 L1541.8 790.7 L1542.2 787.1 L1542.5 791.7 L1543.2 783.3 L1543.2 786.4 L1543.7 783.3 L1544.0 774.9 L1547.9 774.1 L1548.1 776.4 L1548.1 782.4 L1548.5 776.4 L1548.3 778.7 L1549.0 773.4 L1549.0 776.5 L1549.5 773.4 L1549.8 768.0 L1551.1 773.6 L1551.1 776.8 L1551.5 773.6 L1551.7 776.4 L1553.2 771.0 L1554.0 779.0 L1554.0 785.1 L1554.4 779.0 L1554.7 787.1 L1555.5 785.8 L1555.5 792.4 L1555.9 785.8 L1556.2 784.6 L1556.2 790.8 L1556.6 784.6 L1557.0 783.3 L1557.3 795.6 L1557.3 801.3 L1557.7 795.6 L1557.6 808.0 L1564.0 808.0 L1564.7 819.0 L1564.7 824.8 L1565.1 819.0 L1565.3 829.9 L1565.9 820.2 L1565.9 826.7 L1566.3 820.2 L1566.6 810.5 L1567.2 816.3 L1567.2 820.0 L1567.7 816.3 L1567.9 822.1 L1567.9 825.2 L1568.3 822.1 L1568.5 827.9 L1568.5 830.6 L1569.0 827.9 L1569.2 833.7 L1569.8 826.4 L1569.8 829.5 L1570.2 826.4 L1570.4 819.1 L1570.4 823.8 L1570.8 819.1 L1571.0 811.8 L1571.7 815.2 L1571.7 821.6 L1572.1 815.2 L1572.4 818.7 L1572.4 824.9 L1572.8 818.7 L1573.1 822.1 L1577.7 822.1 L1578.2 829.9 L1578.2 834.9 L1578.6 829.9 L1578.7 837.6 L1579.5 844.7 L1579.5 851.0 L1579.9 844.7 L1580.3 851.8 L1580.9 844.9 L1580.9 849.3 L1581.3 844.9 L1582.1 831.2 L1585.4 831.2 L1585.7 794.5 L1585.7 799.8 L1586.1 794.5 L1586.0 757.7 L1586.7 749.5 L1586.7 752.1 L1587.1 749.5 L1587.3 741.4 L1587.3 746.9 L1587.7 741.4 L1588.0 733.2 L1592.9 733.2 L1594.3 745.5 L1594.3 752.4 L1594.8 745.5 L1595.1 751.6 L1595.1 756.2 L1595.5 751.6 L1595.8 757.7 L1597.0 769.7 L1597.0 775.4 L1597.4 769.7 L1597.6 775.7 L1598.2 765.4 L1598.2 769.4 L1598.6 765.4 L1598.8 755.1 L1600.1 753.8 L1600.1 758.4 L1600.5 753.8 L1600.8 753.1 L1600.8 759.1 L1601.2 753.1 L1601.4 752.5 L1602.1 763.7 L1602.1 768.1 L1602.5 763.7 L1602.8 774.8 L1602.8 779.8 L1603.2 774.8 L1603.5 786.0 L1604.7 798.1 L1604.7 804.3 L1605.1 798.1 L1605.3 804.1 L1606.0 796.4 L1606.0 801.1 L1606.4 796.4 L1606.7 788.6 L1606.7 793.4 L1607.1 788.6 L1607.4 780.9 L1608.6 787.8 L1608.6 793.8 L1609.0 787.8 L1609.2 791.2 L1609.9 783.5 L1609.9 787.4 L1610.3 783.5 L1610.5 775.7 L1610.5 780.9 L1610.9 775.7 L1611.2 768.0 L1611.8 773.1 L1611.8 779.2 L1612.2 773.1 L1612.5 778.3 L1612.5 784.0 L1612.9 778.3 L1613.8 788.6 L1614.4 783.9 L1614.4 786.5 L1614.8 783.9 L1615.0 779.1 L1615.0 781.6 L1615.4 779.1 L1615.6 774.4 L1616.2 781.2 L1616.2 787.8 L1616.7 781.2 L1616.9 788.0 L1616.9 793.4 L1617.3 788.0 L1617.5 794.7 L1617.5 801.3 L1618.0 794.7 L1618.2 801.5 L1618.8 805.8 L1618.8 811.1 L1619.2 805.8 L1619.4 810.1 L1619.4 815.7 L1619.8 810.1 L1620.0 814.4 L1620.8 831.1 L1620.8 836.7 L1621.2 831.1 L1621.5 847.9 L1622.1 841.0 L1622.1 846.5 L1622.5 841.0 L1622.8 834.2 L1622.8 840.1 L1623.2 834.2 L1623.4 827.3 L1624.0 828.6 L1624.0 831.9 L1624.4 828.6 L1624.7 829.9 L1624.7 835.9 L1625.1 829.9 L1625.9 832.5 L1626.6 822.8 L1626.6 827.0 L1627.0 822.8 L1627.8 803.5 L1627.8 808.5 L1628.2 803.5 L1628.5 793.8 L1629.1 786.9 L1629.1 790.7 L1629.5 786.9 L1629.7 780.0 L1629.7 783.9 L1630.1 780.0 L1630.3 773.1 L1631.0 780.0 L1631.0 785.4 L1631.4 780.0 L1632.4 793.8 L1633.1 797.6 L1633.1 802.7 L1633.5 797.6 L1633.7 801.5 L1633.7 804.5 L1634.1 801.5 L1635.0 809.2 L1635.7 798.0 L1635.7 804.7 L1636.1 798.0 L1636.3 786.9 L1636.3 789.4 L1636.7 786.9 L1637.0 775.7 L1637.5 764.8 L1637.5 769.9 L1638.0 764.8 L1638.1 753.8 L1640.0 752.8 L1640.0 757.2 L1640.4 752.8 L1640.6 752.5 L1641.2 760.2 L1641.2 765.6 L1641.6 760.2 L1641.7 768.0 L1642.5 761.1 L1642.5 764.2 L1642.9 761.1 L1643.2 754.2 L1643.2 756.7 L1643.6 754.2 L1644.0 747.3 L1644.7 743.4 L1644.7 746.4 L1645.1 743.4 L1646.0 735.7 L1646.0 742.1 L1646.4 735.7 L1646.6 731.9 L1646.6 734.4 L1647.0 731.9 L1647.3 728.0 L1647.9 730.1 L1647.9 733.7 L1648.3 730.1 L1648.5 732.3 L1648.5 735.6 L1648.9 732.3 L1649.1 734.4 L1649.8 740.2 L1649.8 746.2 L1650.2 740.2 L1650.4 746.0 L1650.4 752.4 L1650.8 746.0 L1651.0 751.9 L1651.0 754.7 L1651.5 751.9 L1651.7 757.7 L1652.3 760.6 L1652.3 766.3 L1652.8 760.6 L1653.0 763.5 L1653.0 770.2 L1653.4 763.5 L1653.7 766.4 L1653.7 773.2 L1654.1 766.4 L1654.3 769.3 L1655.0 762.8 L1655.0 765.3 L1655.4 762.8 L1655.7 756.4 L1655.7 761.8 L1656.1 756.4 L1656.4 749.9 L1657.6 738.8 L1657.6 742.6 L1658.0 738.8 L1658.2 733.2 L1658.8 732.9 L1658.8 736.1 L1659.2 732.9 L1660.2 732.2 L1660.2 734.9 L1660.6 732.2 L1660.8 731.9 L1661.4 724.1 L1661.4 729.2 L1661.8 724.1 L1662.0 716.4 L1662.7 718.3 L1662.7 723.9 L1663.1 718.3 L1663.3 720.2 L1663.3 726.3 L1663.7 720.2 L1663.9 722.2 L1663.9 727.6 L1664.3 722.2 L1664.6 724.1 L1665.2 718.1 L1665.2 722.5 L1665.6 718.1 L1665.8 712.1 L1665.8 718.1 L1666.2 712.1 L1666.4 706.1 L1667.8 705.6 L1667.8 710.6 L1668.2 705.6 L1668.4 705.3 L1668.4 708.0 L1668.8 705.3 L1669.8 704.8 L1670.5 701.9 L1670.5 708.1 L1670.9 701.9 L1671.1 699.0 L1671.1 704.2 L1671.5 699.0 L1672.4 693.2 L1673.6 710.4 L1673.6 714.3 L1674.0 710.4 L1674.2 719.0 L1674.9 713.0 L1674.9 719.5 L1675.3 713.0 L1675.5 706.9 L1675.5 712.5 L1675.9 706.9 L1676.2 700.9 L1676.8 690.0 L1676.8 696.5 L1677.2 690.0 L1677.5 679.0 L1678.8 700.9 L1679.4 707.8 L1679.4 710.2 L1679.8 707.8 L1680.0 714.6 L1680.0 719.0 L1680.4 714.6 L1680.6 721.5 L1681.3 714.6 L1681.3 720.8 L1681.7 714.6 L1682.7 700.9 L1683.4 700.0 L1683.4 706.3 L1683.8 700.0 L1684.7 698.3 L1686.0 708.6 L1686.6 709.5 L1686.6 713.2 L1687.0 709.5 L1687.8 711.2 L1689.0 726.7 L1689.0 733.3 L1689.4 726.7 L1689.6 734.4 L1690.3 728.4 L1690.3 731.2 L1690.7 728.4 L1691.0 722.4 L1691.0 728.5 L1691.4 722.4 L1691.7 716.4 L1692.3 718.3 L1692.3 724.2 L1692.8 718.3 L1693.7 722.2 L1693.7 727.4 L1694.1 722.2 L1694.3 724.1 L1694.9 733.6 L1694.9 738.1 L1695.3 733.6 L1695.5 743.0 L1695.5 746.6 L1695.9 743.0 L1696.1 752.5 L1696.8 746.5 L1696.8 752.5 L1697.2 746.5 L1697.5 740.4 L1697.5 743.3 L1697.9 740.4 L1698.2 734.4 L1699.5 728.0 L1699.5 731.5 L1699.9 728.0 L1700.1 724.7 L1700.1 731.3 L1700.5 724.7 L1700.7 721.5 L1702.0 708.6 L1702.0 713.3 L1702.4 708.6 L1702.7 702.2 L1702.7 705.5 L1703.1 702.2 L1703.3 695.8 L1704.0 695.1 L1704.0 698.4 L1704.4 695.1 L1704.6 694.5 L1704.6 698.6 L1705.0 694.5 L1705.2 693.9 L1705.2 698.1 L1705.7 693.9 L1705.9 693.2 L1706.6 698.4 L1706.6 701.5 L1707.0 698.4 L1707.2 703.5 L1707.9 699.2 L1707.9 706.2 L1708.3 699.2 L1708.5 694.9 L1708.5 697.8 L1708.9 694.9 L1709.2 690.6 L1710.0 686.8 L1710.0 692.8 L1710.4 686.8 L1710.8 682.9 L1711.5 688.0 L1711.5 693.2 L1712.0 688.0 L1712.3 693.2 L1713.0 693.9 L1713.0 698.7 L1713.4 693.9 L1713.6 694.5 L1713.6 697.1 L1714.0 694.5 L1714.9 695.8 L1716.3 711.3 L1716.3 716.3 L1716.7 711.3 L1717.0 719.0 L1717.7 714.5 L1717.7 720.5 L1718.1 714.5 L1718.3 710.0 L1718.3 716.7 L1718.7 710.0 L1718.9 705.4 L1718.9 711.6 L1719.3 705.4 L1719.6 700.9 L1720.8 704.4 L1720.8 707.0 L1721.2 704.4 L1721.4 706.1 L1722.0 709.5 L1722.0 712.8 L1722.4 709.5 L1722.6 713.0 L1722.6 715.6 L1723.0 713.0 L1723.2 716.4 L1723.9 710.4 L1723.9 716.8 L1724.3 710.4 L1724.5 704.3 L1724.5 711.1 L1724.9 704.3 L1725.2 698.3 L1726.6 685.4 L1726.6 690.6 L1727.0 685.4 L1727.3 679.0 L1730.4 679.0 L1731.1 675.5 L1731.1 678.4 L1731.5 675.5 L1732.3 668.3 L1732.3 673.4 L1732.8 668.3 L1733.0 664.8 L1733.7 663.8 L1733.7 670.6 L1734.1 663.8 L1734.3 662.8 L1734.3 667.1 L1734.7 662.8 L1734.9 661.9 L1734.9 665.1 L1735.3 661.9 L1735.6 660.9 L1737.8 650.2 L1737.8 652.9 L1738.2 650.2 L1738.6 646.7 L1739.1 640.7 L1739.1 644.8 L1739.5 640.7 L1740.2 628.7 L1742.0 651.9 L1745.4 651.9 L1745.7 656.4 L1745.7 662.4 L1746.1 656.4 L1745.9 660.9 L1748.4 660.9 L1749.1 652.5 L1749.1 657.9 L1749.5 652.5 L1749.7 644.2 L1751.0 642.9 L1751.0 646.0 L1751.4 642.9 L1751.7 642.2 L1751.7 649.0 L1752.1 642.2 L1752.3 641.6 L1753.0 639.0 L1753.0 642.8 L1753.4 639.0 L1753.6 636.5 L1753.6 642.3 L1754.0 636.5 L1754.2 633.9 L1754.2 637.8 L1754.7 633.9 L1754.9 631.3 L1755.6 628.1 L1755.6 631.1 L1756.0 628.1 L1756.2 624.8 L1756.2 628.1 L1756.6 624.8 L1756.8 621.6 L1756.8 624.7 L1757.2 621.6 L1757.5 618.4 L1761.3 618.4 L1761.7 611.0 L1761.7 613.5 L1762.1 611.0 L1762.0 603.5 L1762.7 610.2 L1762.7 613.5 L1763.1 610.2 L1763.3 616.9 L1763.3 623.6 L1763.7 616.9 L1764.0 623.6 L1764.7 613.5 L1764.7 620.2 L1765.1 613.5 L1765.3 603.5 L1767.4 602.2 L1768.1 606.2 L1768.1 610.7 L1768.5 606.2 L1768.7 610.2 L1769.4 615.1 L1769.4 621.8 L1769.8 615.1 L1770.7 624.9 L1771.3 614.5 L1771.3 619.1 L1771.8 614.5 L1772.0 604.2 L1772.7 608.0 L1772.7 614.2 L1773.1 608.0 L1773.3 611.8 L1773.3 617.1 L1773.7 611.8 L1774.0 615.6 L1774.7 621.0 L1774.7 624.4 L1775.1 621.0 L1775.4 626.3 L1776.1 619.6 L1776.1 625.3 L1776.5 619.6 L1776.7 612.9 L1777.4 616.9 L1777.4 620.0 L1777.8 616.9 L1778.7 624.9 L1779.2 614.2 L1779.2 618.5 L1779.7 614.2 L1779.8 603.5 L1782.1 603.5 L1782.5 594.9 L1782.5 598.5 L1783.0 594.9 L1783.0 586.2 L1792.8 586.2 L1793.4 580.1 L1794.0 583.8 L1794.0 587.0 L1794.4 583.8 L1794.5 587.5 L1795.2 600.2 L1795.2 604.1 L1795.6 600.2 L1795.8 612.9 L1796.8 602.2 L1797.4 605.5 L1797.4 612.5 L1797.8 605.5 L1798.1 608.9 L1798.4 595.2 L1798.4 601.7 L1798.8 595.2 L1798.8 581.5 L1799.5 582.6 L1799.5 586.0 L1799.9 582.6 L1800.1 583.7 L1800.1 587.5 L1800.5 583.7 L1800.8 584.8 L1801.4 592.1 L1801.4 595.5 L1801.8 592.1 L1802.1 599.5 L1803.5 599.5 L1804.2 607.5 L1804.2 614.5 L1804.6 607.5 L1804.8 615.6 L1806.1 630.3 L1807.5 622.3 L1808.2 628.1 L1808.2 631.9 L1808.6 628.1 L1809.5 639.7 L1810.0 635.7 L1810.0 641.4 L1810.4 635.7 L1810.5 631.6 L1811.0 626.2 L1811.0 633.2 L1811.4 626.2 L1811.5 620.9 L1816.2 620.9 L1817.0 614.2 L1817.0 620.4 L1817.4 614.2 L1817.8 607.6 L1818.2 618.3 L1818.2 621.4 L1818.6 618.3 L1818.6 629.0 L1822.9 629.0 L1823.6 623.6 L1823.6 629.9 L1824.0 623.6 L1824.2 618.3 L1824.8 624.3 L1824.8 627.6 L1825.2 624.3 L1825.5 630.3 L1826.2 636.3 L1826.2 642.9 L1826.6 636.3 L1826.9 642.3 L1827.4 633.6 L1827.4 638.6 L1827.8 633.6 L1827.9 624.9 L1828.7 624.5 L1828.7 627.7 L1829.1 624.5 L1829.4 624.0 L1829.4 629.7 L1829.8 624.0 L1830.2 623.6 L1830.6 620.2 L1830.6 623.1 L1831.0 620.2 L1830.9 616.9 L1831.6 624.2 L1831.6 629.5 L1832.0 624.2 L1832.2 631.6 L1832.9 632.9 L1832.9 636.6 L1833.3 632.9 L1833.5 634.3 L1833.5 639.5 L1833.9 634.3 L1834.2 635.6 L1834.9 629.0 L1834.9 635.1 L1835.3 629.0 L1835.6 622.3 L1835.9 617.2 L1835.9 620.6 L1836.3 617.2 L1836.2 612.2 L1838.2 611.6 L1838.9 615.6 L1838.9 621.4 L1839.3 615.6 L1839.6 619.6 L1839.8 607.5 L1839.8 613.3 L1840.2 607.5 L1840.0 595.5 L1843.6 594.9 L1844.3 597.3 L1844.3 603.5 L1844.7 597.3 L1844.9 599.8 L1844.9 606.0 L1845.3 599.8 L1845.6 602.2 L1846.9 604.9 L1847.2 594.8 L1847.2 597.4 L1847.7 594.8 L1847.6 584.8 L1855.2 584.8 L1856.0 594.2 L1856.2 584.9 L1856.2 591.3 L1856.7 584.9 L1856.5 575.5 L1857.1 572.8 L1857.1 576.1 L1857.5 572.8 L1858.3 567.4 L1861.0 567.2 L1861.7 569.4 L1861.7 572.5 L1862.1 569.4 L1862.3 571.5 L1862.7 560.8 L1862.7 566.0 L1863.1 560.8 L1863.0 550.1 L1863.7 546.8 L1863.7 551.6 L1864.1 546.8 L1864.3 543.4 L1864.5 541.0 L1864.5 545.8 L1864.9 541.0 L1864.7 538.7 L1865.5 542.4 L1865.5 548.1 L1865.9 542.4 L1866.3 546.0 L1867.0 568.8 L1868.3 559.4 L1869.0 564.8 L1869.0 570.5 L1869.4 564.8 L1869.6 570.1 L1869.6 576.0 L1870.0 570.1 L1870.3 575.5 L1871.0 569.8 L1871.0 576.2 L1871.4 569.8 L1871.7 564.1 L1873.0 571.7 L1873.0 576.5 L1873.4 571.7 L1873.7 575.5 L1874.4 573.7 L1874.4 578.6 L1874.8 573.7 L1875.0 571.9 L1875.0 578.8 L1875.4 571.9 L1875.7 570.1 L1876.4 572.8 L1876.4 576.0 L1876.8 572.8 L1877.0 575.4 L1877.0 579.0 L1877.4 575.4 L1877.7 578.1 L1879.0 588.8 L1879.7 591.5 L1879.7 594.4 L1880.1 591.5 L1880.3 594.2 L1880.3 597.5 L1880.7 594.2 L1881.0 596.9 L1881.7 600.9 L1881.7 606.1 L1882.1 600.9 L1882.3 604.9 L1882.3 609.7 L1882.7 604.9 L1883.0 608.9 L1883.3 598.2 L1883.3 601.1 L1883.8 598.2 L1883.7 587.5 L1885.0 614.2 L1885.7 604.2 L1885.7 606.9 L1886.1 604.2 L1886.4 594.2 L1887.1 593.8 L1887.1 598.5 L1887.5 593.8 L1887.7 593.3 L1887.7 597.1 L1888.1 593.3 L1888.4 592.9 L1888.7 588.8 L1888.7 593.1 L1889.1 588.8 L1889.0 584.8 L1889.7 590.1 L1889.7 595.3 L1890.1 590.1 L1890.4 595.5 L1891.7 611.6 L1892.4 614.2 L1892.4 619.3 L1892.8 614.2 L1893.1 616.9 L1893.4 631.0 L1893.4 634.1 L1893.8 631.0 L1893.7 645.0 L1895.7 646.0 L1895.7 650.3 L1896.1 646.0 L1896.4 646.3 L1897.5 651.0 L1898.3 644.0 L1898.3 648.3 L1898.7 644.0 L1899.1 637.0 L1900.4 642.3 L1901.0 636.0 L1901.0 639.9 L1901.4 636.0 L1901.5 629.6 L1902.3 633.3 L1902.3 637.3 L1902.7 633.3 L1903.1 637.0 L1903.8 633.9 L1903.8 640.8 L1904.2 633.9 L1905.1 627.6 L1906.4 633.0 L1908.2 621.6 L1908.7 634.7 L1908.7 639.5 L1909.1 634.7 L1909.1 647.7 L1910.0 654.4 L1911.1 633.6 L1916.5 633.6 L1917.0 638.0 L1917.0 642.3 L1917.4 638.0 L1917.5 642.3 L1918.3 631.6 L1918.3 635.7 L1918.7 631.6 L1919.1 620.9 L1919.8 618.2 L1919.8 621.0 L1920.2 618.2 L1920.5 615.6 L1921.2 619.6 L1921.2 624.3 L1921.6 619.6 L1921.8 623.6 L1922.2 618.9 L1922.2 622.0 L1922.6 618.9 L1922.5 614.2 L1923.6 626.3 L1923.6 633.0 L1924.0 626.3 L1924.2 632.3 L1925.0 622.2 L1925.0 628.4 L1925.4 622.2 L1925.8 612.2 L1927.8 610.2 L1928.5 614.2 L1928.5 619.6 L1928.9 614.2 L1929.2 618.3 L1929.8 619.2 L1929.8 624.7 L1930.2 619.2 L1930.3 620.0 L1930.3 625.0 L1930.7 620.0 L1930.9 620.9 L1931.8 596.9 L1932.5 600.9 L1932.5 604.5 L1932.9 600.9 L1933.2 604.9 L1933.8 612.9 L1933.8 617.3 L1934.2 612.9 L1934.5 620.9 L1935.4 610.2 L1936.1 615.9 L1936.1 619.7 L1936.5 615.9 L1936.8 621.6 L1937.2 611.9 L1937.2 614.9 L1937.6 611.9 L1937.6 602.2 L1938.2 611.2 L1938.2 618.1 L1938.7 611.2 L1938.9 620.3 L1942.5 620.3 L1943.2 623.3 L1943.2 627.0 L1943.6 623.3 L1943.9 626.3 L1944.6 627.6 L1944.6 632.5 L1945.0 627.6 L1945.2 629.0 L1945.6 611.0 L1945.6 614.0 L1946.0 611.0 L1945.9 592.9 L1946.6 588.8 L1946.6 592.6 L1947.0 588.8 L1947.2 584.8 L1948.0 593.5 L1948.0 597.3 L1948.4 593.5 L1948.8 602.2 L1949.3 595.5 L1949.3 598.3 L1949.8 595.5 L1949.9 588.8 L1950.5 598.8 L1950.5 605.1 L1950.9 598.8 L1951.0 608.9 L1951.8 604.2 L1951.8 609.2 L1952.2 604.2 L1952.6 599.5 L1953.2 593.9 L1953.2 597.2 L1953.7 593.9 L1953.9 588.2 L1954.2 601.2 L1954.2 605.7 L1954.7 601.2 L1954.6 614.2 L1955.2 620.0 L1955.2 625.2 L1955.6 620.0 L1955.7 625.8 L1955.7 629.7 L1956.1 625.8 L1956.3 631.6 L1956.5 621.5 L1956.5 624.9 L1957.0 621.5 L1956.8 611.3 L1961.3 611.3 L1961.5 615.8 L1961.5 620.0 L1961.9 615.8 L1961.7 620.3 L1966.6 620.3 L1966.8 605.9 L1966.8 608.4 L1967.2 605.9 L1967.0 591.5 L1969.9 591.5 L1970.5 600.9 L1970.5 607.2 L1970.9 600.9 L1971.0 610.2 L1971.6 602.2 L1971.6 607.2 L1972.0 602.2 L1972.3 594.2 L1972.3 597.9 L1972.7 594.2 L1972.9 586.2 L1973.7 604.9 L1974.3 610.2 L1974.3 616.2 L1974.8 610.2 L1975.0 615.6 L1975.3 610.2 L1975.3 613.0 L1975.7 610.2 L1975.6 604.9" stroke="#e01818" stroke-width="1.3"/></svg>
</body></html>
